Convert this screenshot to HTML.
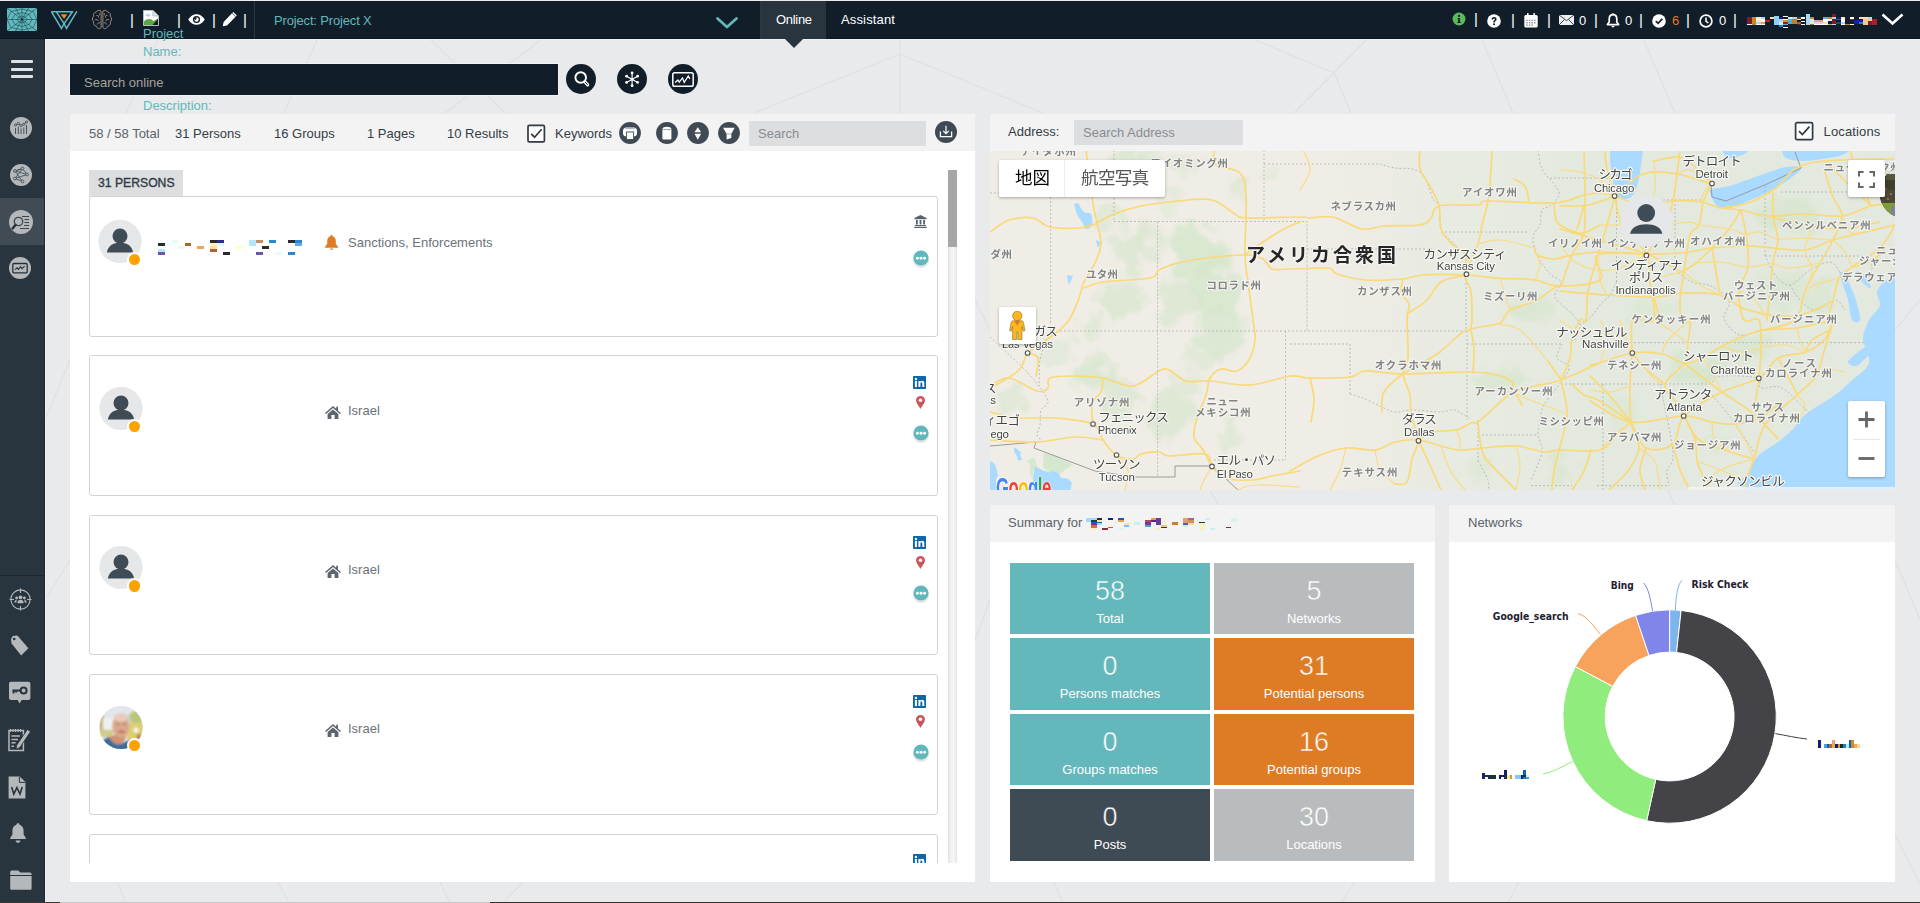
<!DOCTYPE html>
<html lang="en">
<head>
<meta charset="utf-8">
<title>Online</title>
<style>
*{box-sizing:border-box;margin:0;padding:0}
html,body{width:1920px;height:903px;overflow:hidden}
body{position:relative;background:#e9eaeb;font-family:"Liberation Sans","Noto Sans CJK JP",sans-serif;font-size:13px;color:#3f4850}
.abs{position:absolute}
.t{position:absolute;white-space:nowrap;line-height:1}
#bg{position:absolute;left:0;top:0;width:1920px;height:903px}
#topbar{position:absolute;left:0;top:0;width:1920px;height:39px;background:#111e2a;border-top:1px solid #ebebef}
#side{position:absolute;left:0;top:39px;width:45px;height:864px;background:#28343e}
#side .act{position:absolute;left:0;top:159px;width:45px;height:47px;background:#414b54}
.sic{position:absolute;left:10px;width:22px;height:22px;border-radius:50%;background:#b6babd}
.panel{position:absolute;background:#fff}
.phead{position:absolute;left:0;top:0;width:100%;background:#f3f3f3}
.inp{position:absolute;background:#dddee0;color:#8d9196;font-size:13px}
.card{position:absolute;left:89px;width:849px;height:140px;border:1px solid #d4d4d4;border-radius:3px;background:#fff}
.av{position:absolute;width:44px;height:44px;border-radius:50%;background:#e9eaeb;overflow:hidden}
.dot{position:absolute;width:12px;height:12px;border-radius:50%;background:#f59c0b;border:1px solid #fff}
.tile{position:absolute;width:200px;height:71px;color:#fff;text-align:center}
.tile b{position:absolute;left:0;width:100%;top:15px;font-weight:normal;font-size:27px;line-height:1}
.tile i{position:absolute;left:0;width:100%;top:49px;font-style:normal;font-size:13px;line-height:1}
.hd{font-size:13px;color:#333d46}.ct{font-size:13px;color:#6b7279}
.ms{fill:#828282;stroke:#f4f4f0;stroke-width:2.2px;font-weight:bold}.mc{fill:#444;stroke:#f7f7f4;stroke-width:2.4px}.mn{fill:#262626;stroke:#f4f4f0;stroke-width:2.5px;font-weight:bold}
.teal{background:#64b8bb}.grey{background:#b8bcbe}.org{background:#de7b25}.dark{background:#3f4b54}
.teal b{-webkit-text-stroke:.55px #64b8bb}.grey b{-webkit-text-stroke:.55px #b8bcbe}.org b{-webkit-text-stroke:.55px #de7b25}.dark b{-webkit-text-stroke:.55px #3f4b54}
</style>
</head>
<body>
<svg id="bg" viewBox="0 0 1920 903"><g stroke="#e0e1e3" stroke-width="1.3" fill="none">
<path d="M158 39L126 113L95 200M317.5 39L283.7 113M430 39L505 113M542 39L445 113M900 39V113M900 54L754 113M900 54L1043 113M1252.700 39L1334 72.800L1367 39M1334 72.800L1294 113M1334 72.800L1351 113M1481.500 39L1513 113M1643.500 39L1675 113"/>
<path d="M45 420L70 360M45 600L70 560M975 300L990 330M1895 330L1920 300M1895 560L1920 620M117 882L126 903M278 882L289 903M440 882L450 903M523 882L503 903M1054 882L1063 903M1355 882L1341 903M1519 882L1508 903M1895 835L1920 884M975 640L990 600M1668 490L1675 505M1210 490L1218 505"/>
</g></svg>

<!-- TOPBAR -->
<div class="abs" style="left:45px;top:39px;width:1875px;height:1px;background:#f0f0f1"></div>
<div class="abs" style="left:45px;top:39px;width:1px;height:864px;background:#f0f0f1"></div>
<div id="topbar"></div>
<div class="abs" style="left:0;top:38px;width:1920px;height:1px;background:#0c1721"></div>
<!-- topbar left icons -->
<svg class="abs" style="left:7px;top:8px" width="30" height="23" viewBox="0 0 30 23"><rect width="30" height="23" rx="1.2" fill="#5fb9bd"/><g stroke="#1d3b46" stroke-width=".55" fill="none"><path d="M15 0V23M0 11.5H30M0 0L30 23M30 0L0 23M8.500 0L21.500 23M21.500 0L8.500 23"/><polygon points="15,8 18.500,9.300 20,11.500 18.500,13.700 15,15 11.500,13.700 10,11.500 11.500,9.300"/><polygon points="15,4.500 22,6.500 25,11.500 22,16.500 15,18.500 8,16.500 5,11.500 8,6.500"/><polygon points="15,1 26,3.500 30,11.500 26,19.500 15,22 4,19.500 0,11.500 4,3.500"/></g><circle cx="15" cy="11.500" r="1" fill="#16313c"/></svg>
<svg class="abs" style="left:51px;top:11px" width="27" height="19" viewBox="0 0 27 19"><path d="M0.2 0.3L10.5 17.4L13.1 12.6L15.5 17.4L25.9 0.3" fill="none" stroke="#5fb9bd" stroke-width="1.5" stroke-linejoin="miter"/><path d="M1 0.8H22.2M5.4 0.8L13.1 12.6L21.4 0.8" fill="none" stroke="#5fb9bd" stroke-width="1.5"/><polygon points="9.7,3.2 16.3,3.2 13.1,8" fill="#f5891f"/></svg>
<svg class="abs" style="left:91px;top:9px" width="22" height="22" viewBox="0 0 22 22"><g fill="none" stroke="#bfa28b" stroke-width="0.8"><path d="M10.1 2.2C8.8 .8 6.3 1 5.4 3C3 3.2 2 5.4 2.8 7.2C1 8.6 1 11.4 2.6 12.8C2 15 3.4 17 5.4 17.2C6 19.6 8.8 20.6 10.1 18.6Z"/><path d="M11.9 2.2C13.2 .8 15.7 1 16.6 3C19 3.2 20 5.4 19.2 7.2C21 8.6 21 11.4 19.4 12.8C20 15 18.6 17 16.6 17.2C16 19.6 13.2 20.6 11.9 18.6Z"/><path d="M5.4 6.5C6.8 6.2 7.8 7.2 7.6 8.6M3.8 11C5.2 10 7 10.6 7.4 12.2M6.4 15.4C6.6 14 8 13.4 9.2 14M8 4.2C8.8 4.8 8.8 6 8 6.6M16.6 6.5C15.2 6.2 14.2 7.2 14.4 8.6M18.2 11C16.8 10 15 10.6 14.6 12.2M15.6 15.4C15.4 14 14 13.4 12.8 14M14 4.2C13.2 4.8 13.2 6 14 6.6"/></g></svg>
<div class="t" style="left:130px;top:12px;font-size:15px;color:#fff">|</div>
<svg class="abs" style="left:143px;top:10px" width="16" height="16" viewBox="0 0 16 16"><path d="M.5.5H10L15.5 6V15.5H.5Z" fill="#fff" stroke="#b9bdc2"/><path d="M10 .5V6H15.5" fill="#dfe3e8" stroke="#b9bdc2"/><path d="M1 15V11.5C4 8 8 8.5 10.5 11L15 8.5V15Z" fill="#5aa845"/><ellipse cx="5" cy="5.2" rx="2.6" ry="1.4" fill="#b9d4f3"/><path d="M9.5 15L15 9V15Z" fill="#111e2a"/></svg>
<div class="t" style="left:143px;top:25px;font-size:13px;line-height:18px;color:#62b8bb;white-space:normal;width:46px">Project Name:</div>
<div class="t" style="left:143px;top:97px;font-size:13px;line-height:18px;color:#62b8bb">Description:</div>
<div class="t" style="left:177px;top:12px;font-size:15px;color:#fff">|</div>
<svg class="abs" style="left:188px;top:14px" width="17" height="11" viewBox="0 0 17 11"><path d="M.3 5.5C3 1.2 6 .2 8.5 .2S14 1.2 16.7 5.5C14 9.8 11 10.8 8.5 10.8S3 9.8 .3 5.5Z" fill="#fff"/><circle cx="8.5" cy="5.5" r="3.6" fill="#111e2a"/><circle cx="8.5" cy="5.5" r="2.2" fill="#fff"/><circle cx="7.3" cy="4.4" r="1.3" fill="#111e2a"/></svg>
<div class="t" style="left:212px;top:12px;font-size:15px;color:#fff">|</div>
<svg class="abs" style="left:222px;top:12px" width="15" height="15" viewBox="0 0 15 15"><path d="M10 1.2L13.6 4.8L5 13.4L.8 14.2L1.6 10Z" fill="#fff"/><path d="M11.3 0L14.8 3.5L13.9 4.4L10.4 .9Z" fill="#fff"/></svg>
<div class="t" style="left:243px;top:12px;font-size:15px;color:#fff">|</div>
<div class="abs" style="left:254px;top:1px;width:1px;height:38px;background:#2b3742"></div>
<div class="t" id="tproj" style="left:274px;top:14px;font-size:13px;color:#62b8bb;letter-spacing:-.16px">Project: Project X</div>
<svg class="abs" style="left:715px;top:16px" width="24" height="14" viewBox="0 0 24 14"><path d="M2.5 2.5L12 11L21.5 2.5" fill="none" stroke="#62b8bb" stroke-width="2.8" stroke-linecap="round" stroke-linejoin="round"/></svg>
<div class="abs" style="left:760px;top:1px;width:1px;height:38px;background:#2b3742"></div>
<div class="abs" style="left:761px;top:1px;width:65px;height:38px;background:#28343e"></div>
<svg class="abs" style="left:785px;top:39px" width="18" height="9" viewBox="0 0 18 9"><path d="M0 0H18L9 9Z" fill="#28343e"/></svg>
<div class="t" id="tonl" style="left:776px;top:13px;font-size:13px;color:#fff;letter-spacing:-.3px">Online</div>
<div class="t" id="tass" style="left:841px;top:13px;font-size:13px;color:#fff;letter-spacing:.15px">Assistant</div>
<!-- topbar right -->
<svg class="abs" style="left:1452px;top:12px" width="14" height="14" viewBox="0 0 14 14"><circle cx="7" cy="7" r="6.5" fill="#5cb85c"/><circle cx="7" cy="3.9" r="1.1" fill="#111e2a"/><path d="M5.6 6H7.9V9.8H8.7V10.9H5.4V9.8H6.2V7H5.6Z" fill="#111e2a"/></svg>
<div class="t" style="left:1474px;top:10.600px;font-size:15px;color:#fff">|</div>
<svg class="abs" style="left:1487px;top:14px" width="14" height="14" viewBox="0 0 14 14"><circle cx="7" cy="7" r="6.8" fill="#fff"/><path d="M4.6 5.4C4.6 3.9 5.7 3.1 7.1 3.1S9.6 3.9 9.6 5.2C9.6 6.9 7.8 6.9 7.8 8.4H6.2C6.2 6.5 7.9 6.4 7.9 5.3C7.9 4.8 7.6 4.5 7.1 4.5S6.2 4.8 6.2 5.4Z" fill="#111e2a"/><circle cx="7" cy="10.2" r="1" fill="#111e2a"/></svg>
<div class="t" style="left:1511px;top:12px;font-size:15px;color:#fff">|</div>
<svg class="abs" style="left:1524px;top:13px" width="14" height="15" viewBox="0 0 14 15"><rect x=".3" y="2" width="13.4" height="12.6" rx="1.6" fill="#fff"/><rect x="3" y="0" width="1.6" height="3.4" rx=".6" fill="#fff"/><rect x="9.4" y="0" width="1.6" height="3.4" rx=".6" fill="#fff"/><g fill="#9aa3ad"><rect x="2.2" y="6.6" width="1.6" height="1.5"/><rect x="4.8" y="6.6" width="1.6" height="1.5"/><rect x="7.4" y="6.6" width="1.6" height="1.5"/><rect x="10" y="6.6" width="1.6" height="1.5"/><rect x="2.2" y="9" width="1.6" height="1.5"/><rect x="4.8" y="9" width="1.6" height="1.5"/><rect x="7.4" y="9" width="1.6" height="1.5"/><rect x="10" y="9" width="1.6" height="1.5"/><rect x="2.2" y="11.4" width="1.6" height="1.5"/><rect x="4.8" y="11.4" width="1.6" height="1.5"/><rect x="7.4" y="11.4" width="1.6" height="1.5"/></g></svg>
<div class="t" style="left:1547px;top:12px;font-size:15px;color:#fff">|</div>
<svg class="abs" style="left:1559px;top:15px" width="15" height="10" viewBox="0 0 15 10"><rect width="15" height="10" fill="#eceef0"/><path d="M0 0L7.5 5.6L15 0M0 10L5.6 4.4M15 10L9.4 4.4" fill="none" stroke="#3a4753" stroke-width="1"/></svg>
<div class="t" style="left:1579px;top:14px;font-size:13px;color:#fff">0</div>
<div class="t" style="left:1594px;top:12px;font-size:15px;color:#fff">|</div>
<svg class="abs" style="left:1606px;top:13px" width="14" height="15" viewBox="0 0 14 15"><path d="M7 1.6C4.4 1.6 3.2 3.8 3.2 6V9L1.4 11.6H12.6L10.8 9V6C10.8 3.8 9.6 1.6 7 1.6Z" fill="none" stroke="#fff" stroke-width="1.7" stroke-linejoin="round"/><circle cx="7" cy="1.2" r="1" fill="#fff"/><path d="M5.4 12.8H8.6C8.4 14 7.8 14.4 7 14.4S5.6 14 5.4 12.8Z" fill="#fff"/></svg>
<div class="t" style="left:1625px;top:14px;font-size:13px;color:#fff">0</div>
<div class="t" style="left:1639px;top:12px;font-size:15px;color:#fff">|</div>
<svg class="abs" style="left:1652px;top:14px" width="14" height="14" viewBox="0 0 14 14"><circle cx="7" cy="7" r="6.8" fill="#fff"/><path d="M3.8 7.2L6.1 9.4L10.3 4.9" fill="none" stroke="#111e2a" stroke-width="1.7"/></svg>
<div class="t" style="left:1672px;top:14px;font-size:13px;color:#e07b25">6</div>
<div class="t" style="left:1686px;top:12px;font-size:15px;color:#fff">|</div>
<svg class="abs" style="left:1699px;top:14px" width="14" height="14" viewBox="0 0 14 14"><circle cx="7" cy="7" r="5.9" fill="none" stroke="#fff" stroke-width="1.7"/><path d="M7 3.4V7.3L9.4 8.8" fill="none" stroke="#fff" stroke-width="1.5"/></svg>
<div class="t" style="left:1719px;top:14px;font-size:13px;color:#fff">0</div>
<div class="t" style="left:1733px;top:12px;font-size:15px;color:#fff">|</div>
<div id="uname"><div class="abs" style="left:1747.1px;top:17.1px;width:4.9px;height:6.6px;background:#7a1f2a"></div><div class="abs" style="left:1747.1px;top:23.7px;width:4.9px;height:1.2px;background:#fff"></div><div class="abs" style="left:1752.0px;top:17.1px;width:4.4px;height:7.8px;background:#c8862a"></div><div class="abs" style="left:1756.4px;top:17.1px;width:4.4px;height:1.8px;background:#ffe9c4"></div><div class="abs" style="left:1756.4px;top:18.9px;width:4.4px;height:1.3px;background:#fff"></div><div class="abs" style="left:1756.4px;top:20.2px;width:4.4px;height:1.8px;background:#ffe4c0"></div><div class="abs" style="left:1756.4px;top:22.0px;width:4.4px;height:1.8px;background:#a8d8f8"></div><div class="abs" style="left:1756.4px;top:23.7px;width:4.4px;height:1.2px;background:#fff"></div><div class="abs" style="left:1760.8px;top:17.1px;width:4.4px;height:1.8px;background:#a8d8f8"></div><div class="abs" style="left:1760.8px;top:18.9px;width:4.4px;height:3.1px;background:#fff"></div><div class="abs" style="left:1760.8px;top:22.0px;width:4.4px;height:2.2px;background:#e8a830"></div><div class="abs" style="left:1760.8px;top:24.2px;width:4.4px;height:0.7px;background:#fff"></div><div class="abs" style="left:1765.2px;top:20.2px;width:4.9px;height:1.8px;background:#c01f2a"></div><div class="abs" style="left:1770.1px;top:17.1px;width:4.0px;height:2.2px;background:#ffe0a0"></div><div class="abs" style="left:1774.1px;top:16.0px;width:4.9px;height:8.6px;background:#8fd0f8"></div><div class="abs" style="left:1779.0px;top:17.1px;width:4.4px;height:1.8px;background:#1a1a7a"></div><div class="abs" style="left:1779.0px;top:18.9px;width:4.4px;height:2.7px;background:#a8d8f8"></div><div class="abs" style="left:1779.0px;top:21.5px;width:4.4px;height:3.1px;background:#c8f0f0"></div><div class="abs" style="left:1779.0px;top:24.6px;width:4.4px;height:2.2px;background:#1a80d8"></div><div class="abs" style="left:1783.4px;top:16.0px;width:4.9px;height:1.1px;background:#fff"></div><div class="abs" style="left:1783.4px;top:18.9px;width:4.9px;height:1.3px;background:#fff"></div><div class="abs" style="left:1783.4px;top:20.2px;width:4.9px;height:1.8px;background:#d89020"></div><div class="abs" style="left:1783.4px;top:22.0px;width:4.9px;height:1.8px;background:#b8101a"></div><div class="abs" style="left:1783.4px;top:23.7px;width:4.9px;height:0.9px;background:#5ab8e8"></div><div class="abs" style="left:1783.4px;top:26.7px;width:4.9px;height:1.1px;background:#fff"></div><div class="abs" style="left:1788.3px;top:17.1px;width:4.0px;height:2.2px;background:#d8f0d8"></div><div class="abs" style="left:1788.3px;top:19.3px;width:4.0px;height:4.9px;background:#48b0e8"></div><div class="abs" style="left:1792.3px;top:17.1px;width:4.4px;height:2.2px;background:#a8d8f8"></div><div class="abs" style="left:1792.3px;top:19.3px;width:4.4px;height:4.9px;background:#c8801a"></div><div class="abs" style="left:1796.7px;top:17.1px;width:4.4px;height:1.8px;background:#6a3a1a"></div><div class="abs" style="left:1796.7px;top:18.9px;width:4.4px;height:1.3px;background:#e8e0d0"></div><div class="abs" style="left:1796.7px;top:21.5px;width:4.4px;height:2.2px;background:#7a7060"></div><div class="abs" style="left:1796.7px;top:23.7px;width:4.4px;height:1.2px;background:#6a1a2a"></div><div class="abs" style="left:1801.1px;top:17.1px;width:4.4px;height:2.2px;background:#fff"></div><div class="abs" style="left:1801.1px;top:21.1px;width:4.4px;height:1.3px;background:#fff"></div><div class="abs" style="left:1801.1px;top:23.7px;width:4.4px;height:1.2px;background:#fff"></div><div class="abs" style="left:1805.5px;top:14.0px;width:4.4px;height:10.9px;background:#a8d8f8"></div><div class="abs" style="left:1810.0px;top:17.1px;width:4.4px;height:2.2px;background:#c8862a"></div><div class="abs" style="left:1810.0px;top:19.3px;width:4.4px;height:4.9px;background:#d0f0e8"></div><div class="abs" style="left:1810.0px;top:24.2px;width:4.4px;height:0.7px;background:#a86a2a"></div><div class="abs" style="left:1814.4px;top:20.2px;width:4.4px;height:1.8px;background:#d8a0b8"></div><div class="abs" style="left:1814.4px;top:22.0px;width:4.4px;height:2.2px;background:#f8d0d8"></div><div class="abs" style="left:1814.4px;top:24.2px;width:4.4px;height:0.7px;background:#fff"></div><div class="abs" style="left:1818.8px;top:20.2px;width:4.4px;height:1.8px;background:#d8a090"></div><div class="abs" style="left:1818.8px;top:22.0px;width:4.4px;height:2.2px;background:#f8c8d0"></div><div class="abs" style="left:1818.8px;top:24.2px;width:4.4px;height:0.7px;background:#fff"></div><div class="abs" style="left:1823.3px;top:17.1px;width:4.9px;height:1.8px;background:#60a8e0"></div><div class="abs" style="left:1823.3px;top:18.9px;width:4.9px;height:3.1px;background:#fff"></div><div class="abs" style="left:1823.3px;top:22.0px;width:4.9px;height:2.2px;background:#ffe0b0"></div><div class="abs" style="left:1823.3px;top:24.2px;width:4.9px;height:0.7px;background:#fff"></div><div class="abs" style="left:1828.1px;top:17.1px;width:4.0px;height:1.8px;background:#c8862a"></div><div class="abs" style="left:1828.1px;top:18.9px;width:4.0px;height:2.2px;background:#fff"></div><div class="abs" style="left:1828.1px;top:22.0px;width:4.0px;height:2.2px;background:#1a1a3a"></div><div class="abs" style="left:1828.1px;top:24.2px;width:4.0px;height:0.7px;background:#c8a060"></div><div class="abs" style="left:1832.1px;top:14.0px;width:4.0px;height:3.1px;background:#7a1f2a"></div><div class="abs" style="left:1832.1px;top:17.1px;width:4.0px;height:2.2px;background:#a8d8f8"></div><div class="abs" style="left:1832.1px;top:19.3px;width:4.0px;height:1.8px;background:#6a1a2a"></div><div class="abs" style="left:1832.1px;top:21.1px;width:4.0px;height:2.7px;background:#7a1f2a"></div><div class="abs" style="left:1832.1px;top:23.7px;width:4.0px;height:1.2px;background:#a8d8f8"></div><div class="abs" style="left:1836.1px;top:17.1px;width:4.9px;height:1.8px;background:#1a1a5a"></div><div class="abs" style="left:1836.1px;top:18.9px;width:4.9px;height:0.9px;background:#1a60b8"></div><div class="abs" style="left:1836.1px;top:21.5px;width:4.9px;height:2.7px;background:#1a506a"></div><div class="abs" style="left:1841.0px;top:17.1px;width:4.4px;height:1.8px;background:#ffe9c4"></div><div class="abs" style="left:1841.0px;top:18.9px;width:4.4px;height:2.7px;background:#fff"></div><div class="abs" style="left:1841.0px;top:21.5px;width:4.4px;height:2.7px;background:#a8d8f8"></div><div class="abs" style="left:1841.0px;top:24.2px;width:4.4px;height:0.7px;background:#fff"></div><div class="abs" style="left:1845.4px;top:23.7px;width:4.4px;height:1.2px;background:#c8801a"></div><div class="abs" style="left:1849.8px;top:17.1px;width:4.4px;height:1.8px;background:#fff"></div><div class="abs" style="left:1849.8px;top:18.9px;width:4.4px;height:0.9px;background:#6a3a1a"></div><div class="abs" style="left:1849.8px;top:23.7px;width:4.4px;height:1.2px;background:#fff"></div><div class="abs" style="left:1854.3px;top:19.7px;width:4.4px;height:4.4px;background:#1a1ab8"></div><div class="abs" style="left:1858.7px;top:17.1px;width:4.4px;height:1.8px;background:#ffe0b0"></div><div class="abs" style="left:1858.7px;top:19.7px;width:4.4px;height:2.2px;background:#1a1ab8"></div><div class="abs" style="left:1858.7px;top:22.0px;width:4.4px;height:2.2px;background:#1a80d8"></div><div class="abs" style="left:1863.1px;top:17.1px;width:4.9px;height:2.2px;background:#ffd8c0"></div><div class="abs" style="left:1863.1px;top:19.3px;width:4.9px;height:5.3px;background:#f8c888"></div><div class="abs" style="left:1868.0px;top:17.1px;width:4.4px;height:2.2px;background:#a8d8f8"></div><div class="abs" style="left:1868.0px;top:19.3px;width:4.4px;height:1.3px;background:#f8c888"></div><div class="abs" style="left:1868.0px;top:20.6px;width:4.4px;height:4.3px;background:#7a1f2a"></div><div class="abs" style="left:1872.4px;top:18.9px;width:4.7px;height:6.0px;background:#a81f2a"></div></div>
<svg class="abs" style="left:1881px;top:13px" width="23" height="13" viewBox="0 0 23 13"><path d="M1.5 1.5L11.5 10.5L21.5 1.5" fill="none" stroke="#fff" stroke-width="2.6" stroke-linejoin="miter"/></svg>
<!-- SIDEBAR -->
<div id="side"><div class="act"></div></div>
<!-- hamburger -->
<div class="abs" style="left:11px;top:60px;width:22px;height:3px;background:#dfe2e4;border-radius:1px"></div>
<div class="abs" style="left:11px;top:67.5px;width:22px;height:3px;background:#dfe2e4;border-radius:1px"></div>
<div class="abs" style="left:11px;top:75px;width:22px;height:3px;background:#dfe2e4;border-radius:1px"></div>
<!-- side icons top -->
<svg class="abs" style="left:10px;top:117px" width="22" height="22" viewBox="0 0 22 22"><circle cx="11" cy="11" r="11" fill="#b4b8bb"/><g stroke="#4a555e" fill="none" stroke-width="1"><path d="M5.5 17V11M8.3 17V9.5M11 17V11.5M13.8 17V10.5M16.5 17V8"/><path d="M5.5 8L8.3 6.5L11 8.5L13.8 7.3L16.5 5" stroke-width=".8"/></g><g fill="#b4b8bb" stroke="#3b4750" stroke-width=".8"><circle cx="5.5" cy="8" r="1.1"/><circle cx="8.3" cy="6.5" r="1.1"/><circle cx="11" cy="8.5" r="1.1"/><circle cx="13.8" cy="7.3" r="1.1"/><circle cx="16.5" cy="5" r="1.1"/></g></svg>
<svg class="abs" style="left:10px;top:163.500px" width="22" height="22" viewBox="0 0 22 22"><circle cx="11" cy="11" r="11" fill="#b4b8bb"/><g stroke="#3b4750" fill="none" stroke-width=".8"><path d="M5 7L12.5 4.5L17 10.5L5 14.5L12.5 17.5L5 7L12.5 4.5L5 14.5M5 7L17 10.5"/></g><g fill="#b4b8bb" stroke="#3b4750" stroke-width=".8"><circle cx="5" cy="7" r="1.4"/><circle cx="12.5" cy="4.5" r="1.4"/><circle cx="17" cy="10.5" r="1.4"/><circle cx="5" cy="14.5" r="1.4"/><circle cx="12.5" cy="17.5" r="1.4"/></g></svg>
<svg class="abs" style="left:9px;top:209.500px" width="24" height="24" viewBox="0 0 24 24"><circle cx="12" cy="12" r="12" fill="#b4b8bb"/><g stroke="#3b4750" fill="none"><circle cx="9.5" cy="11.5" r="4.2" stroke-width="1.3" fill="#b4b8bb"/><path d="M6.6 14.8L3.6 18.4" stroke-width="2.4" stroke-linecap="round" stroke="#27313a"/><path d="M13 6.5H20M15.5 9.5H20M15.5 12.5H20M15 15.5H20M11 18.5H20" stroke-width="1"/></g></svg>
<svg class="abs" style="left:9px;top:257px" width="22" height="22" viewBox="0 0 22 22"><circle cx="11" cy="11" r="11" fill="#b4b8bb"/><rect x="3.8" y="6.5" width="14.4" height="9.4" rx="1.2" fill="none" stroke="#27313a" stroke-width="1.3"/><path d="M6 12.6L8.2 10.8L9.6 12.4L11.6 9.6L13 11.6L15.6 9.2" fill="none" stroke="#27313a" stroke-width="1.1"/></svg>
<div class="abs" style="left:0;top:575px;width:45px;height:1px;background:#1b2630"></div>
<!-- side icons bottom -->
<svg class="abs" style="left:9px;top:588px" width="23" height="23" viewBox="0 0 23 23"><circle cx="11.5" cy="11.5" r="9.6" fill="none" stroke="#b4b8bb" stroke-width="1.1"/><path d="M11.5 .5V5M11.5 18V22.5M.5 11.5H5M18 11.5H22.5" stroke="#b4b8bb" stroke-width="1.1"/><g fill="#b4b8bb"><circle cx="11.5" cy="9.3" r="1.9"/><path d="M8.4 15.2C8.4 12.6 9.8 11.8 11.5 11.8S14.6 12.6 14.6 15.2Z"/><circle cx="7.6" cy="10" r="1.4"/><path d="M5.3 14.4C5.3 12.5 6.4 11.9 7.8 12C7.4 12.8 7.4 13.6 7.4 14.4Z"/><circle cx="15.4" cy="10" r="1.4"/><path d="M17.7 14.4C17.7 12.5 16.6 11.9 15.2 12C15.6 12.8 15.6 13.6 15.6 14.4Z"/></g></svg>
<svg class="abs" style="left:10px;top:635px" width="20" height="22" viewBox="0 0 20 22"><path d="M1 4.2L2.6 1L7.4 .6L18.4 13.2L11.2 20.6L1.6 8.6Z" fill="#b4b8bb"/><circle cx="4.2" cy="4" r="1.3" fill="#28343e"/></svg>
<svg class="abs" style="left:8px;top:681px" width="24" height="24" viewBox="0 0 24 24"><path d="M3 .8H20.4C21.6 .8 22.4 1.6 22.4 2.8V17C22.4 18.2 21.6 19 20.4 19H13.6L11.6 22.6L9.6 19H3C1.8 19 1 18.2 1 17V2.8C1 1.6 1.8 .8 3 .8Z" fill="#b4b8bb"/><circle cx="15.6" cy="9.6" r="3" fill="none" stroke="#28343e" stroke-width="2"/><path d="M12.6 9.6H4.4M5.6 9.6V12.4M8.2 9.6V11.6" stroke="#28343e" stroke-width="2" fill="none"/></svg>
<svg class="abs" style="left:8px;top:728px" width="24" height="24" viewBox="0 0 24 24"><path d="M1 2.6H15.4V22.6H1Z" fill="none" stroke="#b4b8bb" stroke-width="1.5"/><path d="M2.5 1V4M5 1V4M7.5 1V4M10 1V4M12.5 1V4" stroke="#b4b8bb" stroke-width="1.1"/><path d="M3.4 8H12M3.4 11.4H10M3.4 14.8H7.6M3.4 18.2H6" stroke="#b4b8bb" stroke-width="1.5"/><path d="M19.4 1.4L22.6 3.6L12 19.4L8 21.4L8.6 17.2Z" fill="#b4b8bb" stroke="#28343e" stroke-width=".9"/></svg>
<svg class="abs" style="left:8px;top:776px" width="18" height="23" viewBox="0 0 18 23"><path d="M.6 .4H11.8L17.4 6V22.4H.6Z" fill="#b4b8bb"/><path d="M11.4 .8V6.4H17" fill="none" stroke="#28343e" stroke-width="1"/><path d="M3.6 11L5.8 18L8.9 11.6L12 18L14.2 11" fill="none" stroke="#28343e" stroke-width="1.6" stroke-linejoin="miter"/></svg>
<svg class="abs" style="left:10px;top:823px" width="16" height="21" viewBox="0 0 16 21"><path d="M8 .2C9 .2 9.6 .8 9.6 1.8C12.4 2.6 13.6 5 13.6 8V11.6L15.8 15V16H.2V15L2.4 11.6V8C2.4 5 3.6 2.6 6.4 1.8C6.4 .8 7 .2 8 .2Z" fill="#b4b8bb"/><path d="M5.6 17.4H10.4C10.2 19.2 9.2 19.8 8 19.8S5.8 19.2 5.6 17.4Z" fill="#b4b8bb"/></svg>
<svg class="abs" style="left:10px;top:870px" width="22" height="20" viewBox="0 0 22 20"><path d="M.2 2C.2 1 1 .4 1.8 .4H8L10.4 2.6H20C21 2.6 21.6 3.4 21.6 4.2V5H.2Z" fill="#b4b8bb"/><path d="M.2 6H21.6V18.4C21.6 19.2 21 19.8 20.2 19.8H1.6C.8 19.8 .2 19.2 .2 18.4Z" fill="#b4b8bb"/></svg>
<div class="abs" style="left:44px;top:39px;width:1px;height:864px;background:#1c2732"></div>
<div class="abs" style="left:0;top:902px;width:60px;height:1px;background:#3a3835"></div>
<div class="abs" style="left:60px;top:902px;width:430px;height:1px;background:#c6c6c6"></div>
<div class="abs" style="left:490px;top:902px;width:1430px;height:1px;background:#33312f"></div>

<!-- SEARCH -->
<div class="abs" id="search" style="left:70px;top:64px;width:488px;height:31px;background:#111e2a;box-shadow:0 0 0 1px rgba(255,255,255,.45)"></div>
<div class="t" id="tso" style="left:84px;top:76px;font-size:13px;color:#a9a29c">Search online</div>
<svg class="abs" style="left:566px;top:64px" width="30" height="30" viewBox="0 0 30 30"><circle cx="15" cy="15" r="15" fill="#111e2a"/><circle cx="14.700" cy="13.500" r="5.300" fill="none" stroke="#fff" stroke-width="1.900"/><path d="M18.900 17.900L21.700 20.900" stroke="#fff" stroke-width="3.200" stroke-linecap="round"/><path d="M19.300 18.300L21.400 20.600" stroke="#111e2a" stroke-width="1" stroke-linecap="round"/></svg>
<svg class="abs" style="left:617px;top:64px" width="30" height="30" viewBox="0 0 30 30"><circle cx="15" cy="15" r="15" fill="#111e2a"/><g stroke="#fff" stroke-width="1.150"><path d="M15.100 8.800V21.800M9.500 12.200L20.700 18.400M20.700 12.200L9.500 18.400"/></g><g fill="#fff"><circle cx="15.100" cy="8.900" r="1.400"/><circle cx="15.100" cy="21.700" r="1.400"/><circle cx="9.600" cy="12.200" r="1.400"/><circle cx="20.600" cy="18.400" r="1.400"/><circle cx="20.600" cy="12.200" r="1.400"/><circle cx="9.600" cy="18.400" r="1.400"/><circle cx="15.100" cy="15.300" r="1.200"/></g></svg>
<svg class="abs" style="left:668px;top:64px" width="30" height="30" viewBox="0 0 30 30"><circle cx="15" cy="15" r="15" fill="#111e2a"/><rect x="4.800" y="8.800" width="20.400" height="13.400" rx="1.800" fill="none" stroke="#fff" stroke-width="1.500"/><path d="M7.200 18.500L9.900 16L11.200 18.100L14.500 13.900L16.200 18.400L20.300 11.900L21.900 15" fill="none" stroke="#fff" stroke-width="1.250"/></svg>

<!-- LEFT PANEL -->
<div class="panel" id="lp" style="left:70px;top:114px;width:905px;height:768px"><div class="phead" style="height:37px"></div></div>
<div class="t hd" id="h1" style="left:89px;top:127px;color:#59626a">58 / 58 Total</div>
<div class="t hd" id="h2" style="left:175px;top:127px">31 Persons</div>
<div class="t hd" id="h3" style="left:274px;top:127px">16 Groups</div>
<div class="t hd" id="h4" style="left:367px;top:127px">1 Pages</div>
<div class="t hd" id="h5" style="left:447px;top:127px">10 Results</div>
<svg class="abs" style="left:527px;top:124px" width="19" height="19" viewBox="0 0 19 19"><rect x="1" y="1.4" width="16.4" height="16.4" rx="1.4" fill="#fff" stroke="#2f3a44" stroke-width="1.7"/><path d="M4.2 9.8L7.6 13.2L14.6 5.2" fill="none" stroke="#2f3a44" stroke-width="1.7"/></svg>
<div class="t hd" id="h6" style="left:555px;top:127px">Keywords</div>
<svg class="abs" style="left:619px;top:122.3px" width="22" height="22" viewBox="0 0 22 22"><circle cx="11" cy="11" r="10.9" fill="#3f4a54"/><rect x="4" y="5.600" width="14" height="9" rx="3.600" fill="#fff"/><rect x="6.200" y="5.800" width="9.600" height="1.300" fill="#b4b9be"/><rect x="7.400" y="10" width="7.200" height="7.600" fill="#fff" stroke="#3f4a54" stroke-width=".9"/></svg>
<svg class="abs" style="left:656px;top:122.3px" width="22" height="22" viewBox="0 0 22 22"><circle cx="11" cy="11" r="10.9" fill="#3f4a54"/><path d="M6.400 7.600H15.400V16.600C15.400 17.200 15 17.600 14.400 17.600H7.400C6.800 17.600 6.400 17.200 6.400 16.600Z" fill="#fff"/><path d="M6.200 7.300C6.600 5.600 8.400 4.800 10.900 4.800S15.200 5.600 15.600 7.300Z" fill="#fff"/><path d="M6.200 7.500H15.600" stroke="#9aa1a8" stroke-width=".9"/></svg>
<svg class="abs" style="left:687px;top:122.3px" width="22" height="22" viewBox="0 0 22 22"><circle cx="11" cy="11" r="10.9" fill="#3f4a54"/><path d="M10.800 5.200L14.100 10.300H7.500Z" fill="#fff"/><path d="M10.800 17.800L14.100 11.800H7.500Z" fill="#fff"/></svg>
<svg class="abs" style="left:718px;top:122.3px" width="22" height="22" viewBox="0 0 22 22"><circle cx="11" cy="11" r="10.9" fill="#3f4a54"/><path d="M5 5.800H16.700L13.300 11.800V16L8.600 17.600V11.800Z" fill="#fff"/><path d="M8.400 11.900H13.400" stroke="#8b939a" stroke-width=".8"/></svg>
<div class="inp" style="left:749px;top:121px;width:177px;height:25px"></div>
<div class="t" id="tsrch" style="left:758px;top:127px;color:#878c92">Search</div>
<svg class="abs" style="left:935px;top:121px" width="22" height="22" viewBox="0 0 22 22"><circle cx="11" cy="11" r="11" fill="#3f4a54"/><path d="M5.4 10.6V15.6H16.6V10.6" fill="none" stroke="#fff" stroke-width="1.3"/><path d="M11 4.8V12.4M8.2 9.8L11 12.6L13.8 9.8" fill="none" stroke="#fff" stroke-width="1.2"/></svg>
<!-- list -->
<div class="abs" id="list" style="left:70px;top:170px;width:905px;height:693px;overflow:hidden">
<div class="abs" style="left:19px;top:0;width:94px;height:27px;background:#dddee0"></div>
<div class="t" id="tag" style="left:28px;top:6.5px;font-size:12.2px;color:#2f3a44;-webkit-text-stroke:.35px #2f3a44">31 PERSONS</div>
<div class="card" style="left:19px;top:26px;height:141px"></div>
<div class="card" style="left:19px;top:185px;height:141px"></div>
<div class="card" style="left:19px;top:345px;height:140px"></div>
<div class="card" style="left:19px;top:504px;height:141px"></div>
<div class="card" style="left:19px;top:664px;height:141px"></div>
<svg class="abs" style="left:28.4px;top:49.5px" width="44" height="44" viewBox="0 0 44 44"><circle cx="22" cy="21.5" r="21.6" fill="#e6e7e9"/><circle cx="22" cy="16" r="7.5" fill="#3f4b55"/><path d="M8.8 32.6C10 26 15 22.6 22 22.6S34 26 35.2 32.6Z" fill="#3f4b55"/></svg><div class="abs" style="left:56.7px;top:81.6px;width:15.4px;height:15.4px;border-radius:50%;background:#ffa200;border:2px solid #fff"></div><div class="abs" style="left:140.3px;top:70.4px;width:6.8px;height:3px;background:#2b2b2b"></div><div class="abs" style="left:147px;top:70.4px;width:6.8px;height:3px;background:#2c2c8c"></div><div class="abs" style="left:178.8px;top:70.4px;width:6.8px;height:3px;background:#b3e5fc"></div><div class="abs" style="left:185.9px;top:70.4px;width:6.8px;height:3px;background:#c98b60"></div><div class="abs" style="left:198.9px;top:70.4px;width:6.8px;height:3px;background:#2a88d0"></div><div class="abs" style="left:218.1px;top:70.4px;width:6.8px;height:3px;background:#2b2b2b"></div><div class="abs" style="left:224.9px;top:70.4px;width:6.8px;height:3px;background:#2a88d0"></div><div class="abs" style="left:88.1px;top:73.3px;width:6.8px;height:3px;background:#2b2b2b"></div><div class="abs" style="left:101.7px;top:70.4px;width:6.8px;height:3px;background:#e6fcfc"></div><div class="abs" style="left:94.9px;top:73.3px;width:6.8px;height:3px;background:#eefefe"></div><div class="abs" style="left:108.4px;top:76.3px;width:6.8px;height:3px;background:#e6fcfc"></div><div class="abs" style="left:114.5px;top:73.3px;width:6.8px;height:3px;background:#b0652a"></div><div class="abs" style="left:140.3px;top:73.3px;width:6.8px;height:3px;background:#fff3c4"></div><div class="abs" style="left:147px;top:73.3px;width:6.8px;height:3px;background:#dcfafa"></div><div class="abs" style="left:178.8px;top:73.3px;width:6.8px;height:3px;background:#b3e5fc"></div><div class="abs" style="left:224.9px;top:73.3px;width:6.8px;height:3px;background:#64a8ec"></div><div class="abs" style="left:127.4px;top:76.3px;width:6.8px;height:3px;background:#e8a860"></div><div class="abs" style="left:140.3px;top:76.3px;width:6.8px;height:3px;background:#ffe0a0"></div><div class="abs" style="left:166px;top:76.3px;width:6.8px;height:3px;background:#ffffc8"></div><div class="abs" style="left:192.4px;top:76.3px;width:6.8px;height:3px;background:#2b2b2b"></div><div class="abs" style="left:88.1px;top:79.3px;width:6.8px;height:3px;background:#b3e5fc"></div><div class="abs" style="left:140.3px;top:79.3px;width:6.8px;height:3px;background:#b0652a"></div><div class="abs" style="left:88.1px;top:82.3px;width:6.8px;height:3px;background:#6458b0"></div><div class="abs" style="left:153.1px;top:82.3px;width:6.8px;height:3px;background:#2b2b2b"></div><div class="abs" style="left:185.9px;top:82.3px;width:6.8px;height:3px;background:#6458b0"></div><div class="abs" style="left:205.3px;top:82.3px;width:6.8px;height:3px;background:#e6fcfc"></div><div class="abs" style="left:218.1px;top:82.3px;width:6.8px;height:3px;background:#2a88d0"></div><svg class="abs" style="left:255px;top:65px" width="13" height="15" viewBox="0 0 13 15"><path d="M6.5 0C7.2 0 7.6 .5 7.6 1.2C9.8 1.8 10.8 3.8 10.8 6V8.8L13 12V12.8H0V12L2.2 8.8V6C2.2 3.8 3.2 1.8 5.4 1.2C5.4 .5 5.8 0 6.5 0Z" fill="#e07b25"/><path d="M4.9 13.6H8.1C8 14.6 7.3 15 6.5 15S5 14.6 4.9 13.6Z" fill="#e07b25"/></svg><div class="t ct" id="tsanc" style="left:278px;top:66px">Sanctions, Enforcements</div><svg class="abs" style="left:844px;top:45px" width="13" height="13" viewBox="0 0 13 13"><path d="M6.5 0L12.6 3V4.2H.4V3Z" fill="#59636b"/><path d="M2 5H3.8V9.6H2ZM5.6 5H7.4V9.6H5.6ZM9.2 5H11V9.6H9.2Z" fill="#59636b"/><path d="M1 10H12V11H1ZM.2 11.8H12.8V13H.2Z" fill="#59636b"/></svg><svg class="abs" style="left:840.5px;top:78.7px" width="20" height="21" viewBox="0 0 20 21"><ellipse cx="10" cy="11.5" rx="8" ry="7.6" fill="#000" opacity=".10"/><circle cx="10" cy="9" r="7.6" fill="#60b8bc"/><circle cx="6.4" cy="9.3" r="1.45" fill="#fff"/><circle cx="10" cy="9.3" r="1.45" fill="#fff"/><circle cx="13.6" cy="9.3" r="1.45" fill="#fff"/></svg><svg class="abs" style="left:28.5px;top:216.5px" width="44" height="44" viewBox="0 0 44 44"><circle cx="22" cy="21.5" r="21.6" fill="#e6e7e9"/><circle cx="22" cy="16" r="7.5" fill="#3f4b55"/><path d="M8.8 32.6C10 26 15 22.6 22 22.6S34 26 35.2 32.6Z" fill="#3f4b55"/></svg><div class="abs" style="left:56.8px;top:249px;width:15.4px;height:15.4px;border-radius:50%;background:#ffa200;border:2px solid #fff"></div><svg class="abs" style="left:254.5px;top:235.5px" width="16" height="13" viewBox="0 0 16 13"><path d="M8 0L11.2 2.8V.8H13V4.4L16 7L15 8.1L8 2L1 8.1L0 7Z" fill="#5d666e"/><path d="M8 3.4L13.4 8.1V13H9.6V9H6.4V13H2.6V8.1Z" fill="#5d666e"/></svg><div class="t ct" style="left:278px;top:233.8px">Israel</div><svg class="abs" style="left:843px;top:205.8px" width="13" height="13" viewBox="0 0 13 13"><rect width="13" height="13" rx=".8" fill="#0b67a9"/><rect x="1.9" y="4.9" width="2" height="6.2" fill="#fff"/><circle cx="2.9" cy="2.9" r="1.2" fill="#fff"/><path d="M5.4 4.9H7.3V5.8C7.7 5.1 8.4 4.7 9.3 4.7C10.8 4.7 11.3 5.7 11.3 7.3V11.1H9.3V7.8C9.3 6.9 9 6.5 8.4 6.5C7.7 6.5 7.4 7 7.4 7.8V11.1H5.4Z" fill="#fff"/></svg><svg class="abs" style="left:845.5px;top:226px" width="9" height="13" viewBox="0 0 9 13"><path d="M4.5 0C7 0 9 1.9 9 4.3C9 7.2 5.6 10.6 4.5 13C3.4 10.6 0 7.2 0 4.3C0 1.9 2 0 4.5 0Z" fill="#c9565c"/><circle cx="4.5" cy="4.2" r="1.8" fill="#fff"/></svg><svg class="abs" style="left:840.5px;top:254.2px" width="20" height="21" viewBox="0 0 20 21"><ellipse cx="10" cy="11.5" rx="8" ry="7.6" fill="#000" opacity=".10"/><circle cx="10" cy="9" r="7.6" fill="#60b8bc"/><circle cx="6.4" cy="9.3" r="1.45" fill="#fff"/><circle cx="10" cy="9.3" r="1.45" fill="#fff"/><circle cx="13.6" cy="9.3" r="1.45" fill="#fff"/></svg>
<svg class="abs" style="left:28.5px;top:375.9px" width="44" height="44" viewBox="0 0 44 44"><circle cx="22" cy="21.5" r="21.6" fill="#e6e7e9"/><circle cx="22" cy="16" r="7.5" fill="#3f4b55"/><path d="M8.8 32.6C10 26 15 22.6 22 22.6S34 26 35.2 32.6Z" fill="#3f4b55"/></svg><div class="abs" style="left:56.8px;top:408.4px;width:15.4px;height:15.4px;border-radius:50%;background:#ffa200;border:2px solid #fff"></div><svg class="abs" style="left:254.5px;top:395.1px" width="16" height="13" viewBox="0 0 16 13"><path d="M8 0L11.2 2.8V.8H13V4.4L16 7L15 8.1L8 2L1 8.1L0 7Z" fill="#5d666e"/><path d="M8 3.4L13.4 8.1V13H9.6V9H6.4V13H2.6V8.1Z" fill="#5d666e"/></svg><div class="t ct" style="left:278px;top:393.4px">Israel</div><svg class="abs" style="left:843px;top:365.8px" width="13" height="13" viewBox="0 0 13 13"><rect width="13" height="13" rx=".8" fill="#0b67a9"/><rect x="1.9" y="4.9" width="2" height="6.2" fill="#fff"/><circle cx="2.9" cy="2.9" r="1.2" fill="#fff"/><path d="M5.4 4.9H7.3V5.8C7.7 5.1 8.4 4.7 9.3 4.7C10.8 4.7 11.3 5.7 11.3 7.3V11.1H9.3V7.8C9.3 6.9 9 6.5 8.4 6.5C7.7 6.5 7.4 7 7.4 7.8V11.1H5.4Z" fill="#fff"/></svg><svg class="abs" style="left:845.5px;top:386px" width="9" height="13" viewBox="0 0 9 13"><path d="M4.5 0C7 0 9 1.9 9 4.3C9 7.2 5.6 10.6 4.5 13C3.4 10.6 0 7.2 0 4.3C0 1.9 2 0 4.5 0Z" fill="#c9565c"/><circle cx="4.5" cy="4.2" r="1.8" fill="#fff"/></svg><svg class="abs" style="left:840.5px;top:414.2px" width="20" height="21" viewBox="0 0 20 21"><ellipse cx="10" cy="11.5" rx="8" ry="7.6" fill="#000" opacity=".10"/><circle cx="10" cy="9" r="7.6" fill="#60b8bc"/><circle cx="6.4" cy="9.3" r="1.45" fill="#fff"/><circle cx="10" cy="9.3" r="1.45" fill="#fff"/><circle cx="13.6" cy="9.3" r="1.45" fill="#fff"/></svg>
<svg class="abs" style="left:28.5px;top:535.5px" width="44" height="44" viewBox="0 0 44 44"><defs><clipPath id="avc"><circle cx="22" cy="21.5" r="21.6"/></clipPath><filter id="avb" x="-20%" y="-20%" width="140%" height="140%"><feGaussianBlur stdDeviation="1.3"/></filter></defs><g clip-path="url(#avc)"><rect width="44" height="44" fill="#e2e7ed"/><g filter="url(#avb)"><ellipse cx="37" cy="22" rx="11" ry="17" fill="#dccf72"/><ellipse cx="38" cy="11" rx="8" ry="6" fill="#b9c77c"/><ellipse cx="37" cy="24" rx="2.600" ry="2.600" fill="#fbf6e6"/><rect x="-2" y="24" width="16" height="7" fill="#cdcd8c"/><ellipse cx="3" cy="17" rx="3.500" ry="8" fill="#cbb982"/><rect x="4" y="12" width="10" height="11" fill="#eef0f2"/><path d="M0 46C1 36 6 30.500 12 31L21 38L31 34C36 37 36 42 36 46Z" fill="#3c6c9a"/><path d="M10 31C14 29 16 30 18 27L27 31C26 35 22 38.500 19 38.500C15 38 12 35 10 31Z" fill="#cf9272"/><ellipse cx="21.800" cy="20" rx="8.600" ry="11.600" fill="#dba78b"/><ellipse cx="22" cy="11.500" rx="7.200" ry="4.200" fill="#e8cbbd"/><ellipse cx="30" cy="14" rx="1.600" ry="4" fill="#cfcac8"/><ellipse cx="22.500" cy="25.800" rx="3.600" ry="1.300" fill="#b86e62"/><ellipse cx="19" cy="18" rx="1.800" ry=".8" fill="#9a7a72"/><ellipse cx="25.500" cy="18" rx="1.800" ry=".8" fill="#9a7a72"/><ellipse cx="40" cy="31" rx="2.500" ry="3" fill="#b9805e"/></g></g></svg><div class="abs" style="left:56.8px;top:568px;width:15.4px;height:15.4px;border-radius:50%;background:#ffa200;border:2px solid #fff"></div><svg class="abs" style="left:254.5px;top:554.1px" width="16" height="13" viewBox="0 0 16 13"><path d="M8 0L11.2 2.8V.8H13V4.4L16 7L15 8.1L8 2L1 8.1L0 7Z" fill="#5d666e"/><path d="M8 3.4L13.4 8.1V13H9.6V9H6.4V13H2.6V8.1Z" fill="#5d666e"/></svg><div class="t ct" style="left:278px;top:552.4px">Israel</div><svg class="abs" style="left:843px;top:524.8px" width="13" height="13" viewBox="0 0 13 13"><rect width="13" height="13" rx=".8" fill="#0b67a9"/><rect x="1.9" y="4.9" width="2" height="6.2" fill="#fff"/><circle cx="2.9" cy="2.9" r="1.2" fill="#fff"/><path d="M5.4 4.9H7.3V5.8C7.7 5.1 8.4 4.7 9.3 4.7C10.8 4.7 11.3 5.7 11.3 7.3V11.1H9.3V7.8C9.3 6.9 9 6.5 8.4 6.5C7.7 6.5 7.4 7 7.4 7.8V11.1H5.4Z" fill="#fff"/></svg><svg class="abs" style="left:845.5px;top:545px" width="9" height="13" viewBox="0 0 9 13"><path d="M4.5 0C7 0 9 1.9 9 4.3C9 7.2 5.6 10.6 4.5 13C3.4 10.6 0 7.2 0 4.3C0 1.9 2 0 4.5 0Z" fill="#c9565c"/><circle cx="4.5" cy="4.2" r="1.8" fill="#fff"/></svg><svg class="abs" style="left:840.5px;top:573.2px" width="20" height="21" viewBox="0 0 20 21"><ellipse cx="10" cy="11.5" rx="8" ry="7.6" fill="#000" opacity=".10"/><circle cx="10" cy="9" r="7.6" fill="#60b8bc"/><circle cx="6.4" cy="9.3" r="1.45" fill="#fff"/><circle cx="10" cy="9.3" r="1.45" fill="#fff"/><circle cx="13.6" cy="9.3" r="1.45" fill="#fff"/></svg>
<svg class="abs" style="left:843px;top:684px" width="13" height="13" viewBox="0 0 13 13"><rect width="13" height="13" rx=".8" fill="#0b67a9"/><rect x="1.9" y="4.9" width="2" height="6.2" fill="#fff"/><circle cx="2.9" cy="2.9" r="1.2" fill="#fff"/><path d="M5.4 4.9H7.3V5.8C7.7 5.1 8.4 4.7 9.3 4.7C10.8 4.7 11.3 5.7 11.3 7.3V11.1H9.3V7.8C9.3 6.9 9 6.5 8.4 6.5C7.7 6.5 7.4 7 7.4 7.8V11.1H5.4Z" fill="#fff"/></svg>
<div class="abs" style="left:878px;top:0;width:9px;height:693px;background:linear-gradient(to right,#e2e2e2,#f2f2f2 30%,#f6f6f6 55%,#f0f0f0 80%,#e4e4e4)"></div>
<div class="abs" style="left:878px;top:0;width:9px;height:77px;background:#a6a6a6"></div>
</div>

<!-- MAP PANEL -->
<div class="panel" id="mp" style="left:990px;top:114px;width:905px;height:376px"><div class="phead" style="height:37px"></div></div>
<div class="t hd" id="taddr" style="left:1008px;top:125px">Address:</div>
<div class="inp" style="left:1074px;top:120px;width:169px;height:25px"></div>
<div class="t" id="tsa" style="left:1083px;top:126px;color:#878c92">Search Address</div>
<svg class="abs" style="left:1794px;top:121px" width="20" height="20" viewBox="0 0 20 20"><rect x="1.6" y="1.6" width="17" height="17" rx="1.4" fill="#fff" stroke="#2f3a44" stroke-width="1.7"/><path d="M5 10.2L8.4 13.6L15.4 5.6" fill="none" stroke="#2f3a44" stroke-width="1.7"/></svg>
<div class="t hd" id="tloc" style="left:1823.5px;top:125px;letter-spacing:.15px">Locations</div>
<div class="abs" id="map" style="left:990px;top:151px;width:905px;height:339px;overflow:hidden;background:#e9ece2">
<!--MAPSTART--><svg class="abs" style="left:0;top:0" width="905" height="339" viewBox="990 151 905 339"><defs><linearGradient id="lg" x1="990" x2="1895" y1="0" y2="0" gradientUnits="userSpaceOnUse"><stop offset="0" stop-color="#f0ede6"/><stop offset=".36" stop-color="#f0ede6"/><stop offset=".5" stop-color="#e8ebe1"/><stop offset=".7" stop-color="#e3e9de"/><stop offset="1" stop-color="#e3e9de"/></linearGradient><filter id="gb" x="-5%" y="-5%" width="110%" height="110%"><feGaussianBlur stdDeviation="3.2" result="b"/><feTurbulence type="fractalNoise" baseFrequency=".045" numOctaves="3" seed="7" result="t"/><feDisplacementMap in="b" in2="t" scale="34" xChannelSelector="R" yChannelSelector="G"/></filter></defs><rect x="990" y="151" width="905" height="339" fill="url(#lg)"/><g filter="url(#gb)" fill="#d3e5ca"><ellipse cx="1195" cy="250" rx="30" ry="26" opacity="0.75"/><ellipse cx="1215" cy="290" rx="24" ry="28" opacity="0.75"/><ellipse cx="1180" cy="300" rx="20" ry="22" opacity="0.6"/><ellipse cx="1222" cy="335" rx="22" ry="26" opacity="0.7"/><ellipse cx="1200" cy="360" rx="14" ry="14" opacity="0.5"/><ellipse cx="1130" cy="250" rx="20" ry="22" opacity="0.6"/><ellipse cx="1120" cy="300" rx="22" ry="22" opacity="0.6"/><ellipse cx="1150" cy="235" rx="16" ry="10" opacity="0.5"/><ellipse cx="1110" cy="215" rx="16" ry="10" opacity="0.5"/><ellipse cx="1135" cy="160" rx="25" ry="9" opacity="0.7"/><ellipse cx="1185" cy="165" rx="18" ry="10" opacity="0.5"/><ellipse cx="1170" cy="200" rx="12" ry="10" opacity="0.4"/><ellipse cx="1095" cy="375" rx="22" ry="18" opacity="0.7"/><ellipse cx="1120" cy="400" rx="18" ry="15" opacity="0.6"/><ellipse cx="1170" cy="415" rx="22" ry="25" opacity="0.6"/><ellipse cx="1185" cy="385" rx="15" ry="10" opacity="0.5"/><ellipse cx="1230" cy="440" rx="12" ry="15" opacity="0.5"/><ellipse cx="1010" cy="400" rx="15" ry="15" opacity="0.5"/><ellipse cx="1055" cy="350" rx="18" ry="15" opacity="0.4"/><ellipse cx="1090" cy="330" rx="12" ry="14" opacity="0.5"/><ellipse cx="1240" cy="190" rx="10" ry="14" opacity="0.5"/><ellipse cx="1270" cy="175" rx="8" ry="8" opacity="0.4"/><ellipse cx="1700" cy="370" rx="30" ry="12" opacity="0.8"/><ellipse cx="1740" cy="350" rx="30" ry="10" opacity="0.6"/><ellipse cx="1790" cy="215" rx="30" ry="18" opacity="0.6"/><ellipse cx="1780" cy="290" rx="25" ry="18" opacity="0.5"/><ellipse cx="1530" cy="310" rx="25" ry="12" opacity="0.6"/><ellipse cx="1500" cy="380" rx="28" ry="12" opacity="0.6"/><ellipse cx="1650" cy="310" rx="20" ry="10" opacity="0.4"/><ellipse cx="1620" cy="410" rx="12" ry="15" opacity="0.4"/><ellipse cx="1720" cy="440" rx="15" ry="10" opacity="0.4"/><ellipse cx="1820" cy="300" rx="15" ry="20" opacity="0.5"/><ellipse cx="1560" cy="470" rx="12" ry="15" opacity="0.5"/><ellipse cx="1480" cy="470" rx="12" ry="14" opacity="0.4"/></g><g fill="#aadaff"><path d="M1610.0 150.0C1610.2 153.2 1610.0 161.8 1611.0 169.0C1612.0 176.2 1613.8 188.0 1616.0 193.0C1618.2 198.0 1621.2 198.7 1624.0 199.0C1626.8 199.3 1630.5 198.5 1633.0 195.0C1635.5 191.5 1637.3 185.5 1639.0 178.0C1640.7 170.5 1642.3 154.7 1643.0 150.0Z"/><path d="M1709.0 190.0C1710.2 192.5 1712.7 202.0 1716.0 205.0C1719.3 208.0 1723.7 208.7 1729.0 208.0C1734.3 207.3 1740.2 204.3 1748.0 201.0C1755.8 197.7 1767.2 193.3 1776.0 188.0C1784.8 182.7 1799.3 172.5 1801.0 169.0C1802.7 165.5 1793.2 165.8 1786.0 167.0C1778.8 168.2 1767.5 172.8 1758.0 176.0C1748.5 179.2 1736.0 184.0 1729.0 186.0C1722.0 188.0 1718.2 187.7 1716.0 188.0Z"/><path d="M1782.0 150.0C1782.7 151.3 1782.2 156.2 1786.0 158.0C1789.8 159.8 1796.2 161.3 1805.0 161.0C1813.8 160.7 1831.5 157.8 1839.0 156.0C1846.5 154.2 1848.2 151.0 1850.0 150.0Z"/><path d="M1722.0 150.0C1723.0 151.3 1724.7 157.2 1728.0 158.0C1731.3 158.8 1738.3 156.3 1742.0 155.0C1745.7 153.7 1748.7 150.8 1750.0 150.0Z"/><path d="M1074.0 204.0C1074.5 205.7 1075.7 211.0 1077.0 214.0C1078.3 217.0 1080.5 219.5 1082.0 222.0C1083.5 224.5 1084.3 228.5 1086.0 229.0C1087.7 229.5 1091.2 227.5 1092.0 225.0C1092.8 222.5 1092.3 216.2 1091.0 214.0C1089.7 211.8 1086.2 213.8 1084.0 212.0C1081.8 210.2 1079.0 204.5 1078.0 203.0Z"/><path d="M1096.0 240.0C1096.3 241.2 1097.2 246.7 1098.0 247.0C1098.8 247.3 1100.5 242.8 1101.0 242.0Z"/><path d="M1067.0 275.0C1067.3 276.5 1068.0 283.8 1069.0 284.0C1070.0 284.2 1072.3 277.3 1073.0 276.0Z"/><path d="M1839.0 272.0C1839.7 274.2 1841.5 280.3 1843.0 285.0C1844.5 289.7 1846.5 294.2 1848.0 300.0C1849.5 305.8 1850.0 316.7 1852.0 320.0C1854.0 323.3 1859.3 323.3 1860.0 320.0C1860.7 316.7 1857.7 305.8 1856.0 300.0C1854.3 294.2 1851.8 289.7 1850.0 285.0C1848.2 280.3 1845.8 274.2 1845.0 272.0Z"/><path d="M1856.0 270.0C1857.0 272.0 1859.5 279.0 1862.0 282.0C1864.5 285.0 1870.3 289.0 1871.0 288.0C1871.7 287.0 1866.8 278.0 1866.0 276.0Z"/><path d="M1869.0 345.0C1867.2 346.2 1861.5 349.2 1858.0 352.0C1854.5 354.8 1848.3 359.7 1848.0 362.0C1847.7 364.3 1853.0 366.7 1856.0 366.0C1859.0 365.3 1863.3 360.3 1866.0 358.0C1868.7 355.7 1871.0 353.0 1872.0 352.0Z"/><path d="M1895.0 276.0C1893.2 277.0 1887.0 279.3 1884.0 282.0C1881.0 284.7 1877.7 288.2 1877.0 292.0C1876.3 295.8 1880.7 301.2 1880.0 305.0C1879.3 308.8 1874.8 312.5 1873.0 315.0C1871.2 317.5 1870.7 316.0 1869.0 320.0C1867.3 324.0 1863.0 331.8 1863.0 339.0C1863.0 346.2 1871.2 355.8 1869.0 363.0C1866.8 370.2 1855.7 376.7 1850.0 382.0C1844.3 387.3 1842.3 389.7 1835.0 395.0C1827.7 400.3 1813.0 408.3 1806.0 414.0C1799.0 419.7 1797.7 424.3 1793.0 429.0C1788.3 433.7 1783.7 437.7 1778.0 442.0C1772.3 446.3 1763.7 450.2 1759.0 455.0C1754.3 459.8 1751.8 465.2 1750.0 471.0C1748.2 476.8 1723.8 486.8 1748.0 490.0C1772.2 493.2 1870.5 490.0 1895.0 490.0L1895 490L1895 276Z"/><path d="M990.0 461.0L993.8 463.0L996.0 467.0L998.0 475.0L995.6 480.0L997.0 487.5L996.0 490.0L990.0 490.0Z"/><path d="M1033.8 466.9L1037.5 467.5L1043.0 470.6L1049.4 472.5L1052.5 470.6L1058.8 473.0L1060.6 477.5L1068.0 478.8L1071.9 482.5L1070.6 490.0L1033.0 490.0L1033.0 477.5L1034.4 470.0Z"/><path d="M1013.8 447.5L1016.0 448.0L1021.0 452.5L1020.0 455.0L1022.5 460.0L1017.5 460.6L1017.0 456.0L1014.4 452.5Z"/></g><g fill="#d3e8cf"><path d="M1043.8 453.0L1052.5 454.4L1073.0 464.4L1065.0 469.4L1060.6 473.8L1052.5 470.6L1049.4 472.5L1043.0 467.5Z"/><path d="M1027.0 461.0L1034.0 457.5L1037.5 467.5L1033.8 466.9L1033.0 477.5L1030.0 475.0L1030.0 465.0Z"/></g><g fill="none" stroke="#b4b4b4" stroke-width=".85" stroke-dasharray="2 2"><path d="M990.0 193.0L1114.0 193.0"/><path d="M1050.6 193.0L1050.6 331.0"/><path d="M1114.0 150.0L1114.0 221.5"/><path d="M1114.0 221.5L1300.0 221.5"/><path d="M1157.5 221.5L1157.5 477.0"/><path d="M1264.0 150.0L1264.0 221.5"/><path d="M1264.0 164.0L1380.0 164.0"/><path d="M1290.0 221.5L1307.0 221.5L1307.0 331.0"/><path d="M1307.0 249.0L1432.0 249.0"/><path d="M1060.0 331.0L1465.0 331.0"/><path d="M1285.5 331.0L1285.5 460.0"/><path d="M1214.0 460.0L1285.5 460.0"/><path d="M1290.0 344.0L1350.0 344.0L1350.0 394.0"/><path d="M1467.0 331.0L1467.0 420.0"/><path d="M1467.0 344.0L1562.0 344.0"/><path d="M1478.0 420.0L1478.0 461.0"/><path d="M1478.0 435.0L1538.0 435.0"/><path d="M1531.0 485.6L1572.0 485.6"/><path d="M1561.0 384.0L1712.0 384.0"/><path d="M1590.0 342.6L1867.0 342.6"/><path d="M1603.0 384.0L1603.0 490.0"/><path d="M1597.0 485.6L1669.0 485.6"/><path d="M1550.0 178.0L1611.0 178.0"/><path d="M1635.0 200.0L1703.0 200.0"/><path d="M1616.5 200.0L1616.5 282.0"/><path d="M1675.0 200.0L1675.0 270.0"/><path d="M1765.0 186.0L1765.0 255.0"/><path d="M1765.0 256.0L1869.0 256.0"/><path d="M1781.0 192.0L1848.0 192.0"/><path d="M1441.0 232.0L1529.0 232.0"/><path d="M1466.0 275.0L1466.0 331.0"/><path d="M1350.0 394.0C1352.5 394.8 1359.7 396.8 1365.0 399.0C1370.3 401.2 1377.0 404.8 1382.0 407.0C1387.0 409.2 1390.0 411.5 1395.0 412.0C1400.0 412.5 1404.3 410.0 1412.0 410.0C1419.7 410.0 1434.0 412.0 1441.0 412.0C1448.0 412.0 1449.3 409.0 1454.0 410.0C1458.7 411.0 1466.5 416.7 1469.0 418.0"/><path d="M1478.0 461.0C1479.7 464.2 1486.3 475.2 1488.0 480.0C1489.7 484.8 1488.0 488.3 1488.0 490.0"/><path d="M1562.0 344.0C1561.2 346.3 1555.8 354.2 1557.0 358.0C1558.2 361.8 1568.3 363.0 1569.0 367.0C1569.7 371.0 1565.2 375.7 1561.0 382.0C1556.8 388.3 1547.5 398.7 1544.0 405.0C1540.5 411.3 1541.0 415.0 1540.0 420.0C1539.0 425.0 1537.7 429.7 1538.0 435.0C1538.3 440.3 1543.2 444.5 1542.0 452.0C1540.8 459.5 1532.8 475.3 1531.0 480.0"/><path d="M1660.0 384.0C1662.2 395.3 1671.8 437.5 1673.0 452.0C1674.2 466.5 1667.7 465.3 1667.0 471.0C1666.3 476.7 1668.7 483.5 1669.0 486.0"/><path d="M1712.0 395.0C1715.2 398.8 1724.0 408.5 1731.0 418.0C1738.0 427.5 1750.2 446.3 1754.0 452.0"/><path d="M1712.0 382.0C1713.7 381.0 1714.5 376.7 1722.0 376.0C1729.5 375.3 1750.5 376.0 1757.0 378.0C1763.5 380.0 1756.8 386.3 1761.0 388.0C1765.2 389.7 1773.8 383.7 1782.0 388.0C1790.2 392.3 1805.3 409.7 1810.0 414.0"/><path d="M1675.0 270.0C1677.8 272.0 1686.0 279.3 1692.0 282.0C1698.0 284.7 1704.8 282.8 1711.0 286.0C1717.2 289.2 1726.8 295.5 1729.0 301.0C1731.2 306.5 1722.2 313.3 1724.0 319.0C1725.8 324.7 1734.0 333.2 1740.0 335.0C1746.0 336.8 1756.7 330.8 1760.0 330.0"/><path d="M1380.0 164.0C1382.5 164.7 1389.7 167.2 1395.0 168.0C1400.3 168.8 1407.2 167.7 1412.0 169.0C1416.8 170.3 1420.5 171.0 1424.0 176.0C1427.5 181.0 1430.5 194.0 1433.0 199.0C1435.5 204.0 1437.7 201.0 1439.0 206.0C1440.3 211.0 1438.5 222.7 1441.0 229.0C1443.5 235.3 1449.8 239.5 1454.0 244.0C1458.2 248.5 1464.0 250.8 1466.0 256.0C1468.0 261.2 1466.0 271.8 1466.0 275.0"/><path d="M1538.0 150.0C1538.7 153.2 1539.3 163.3 1542.0 169.0C1544.7 174.7 1551.2 179.7 1554.0 184.0C1556.8 188.3 1559.7 191.3 1559.0 195.0C1558.3 198.7 1552.8 203.5 1550.0 206.0C1547.2 208.5 1543.7 206.8 1542.0 210.0C1540.3 213.2 1541.5 220.5 1540.0 225.0C1538.5 229.5 1533.5 232.0 1533.0 237.0C1532.5 242.0 1534.2 248.8 1537.0 255.0C1539.8 261.2 1546.0 269.5 1550.0 274.0C1554.0 278.5 1560.2 278.2 1561.0 282.0C1561.8 285.8 1553.2 291.7 1555.0 297.0C1556.8 302.3 1567.8 309.3 1572.0 314.0C1576.2 318.7 1579.5 320.7 1580.0 325.0C1580.5 329.3 1575.8 337.5 1575.0 340.0"/><path d="M990.0 337.0C995.3 342.0 1013.8 358.8 1022.0 367.0C1030.2 375.2 1034.7 380.2 1039.0 386.0C1043.3 391.8 1047.7 398.0 1048.0 402.0C1048.3 406.0 1042.3 406.2 1041.0 410.0C1039.7 413.8 1040.7 420.8 1040.0 425.0C1039.3 429.2 1036.8 432.5 1037.0 435.0C1037.2 437.5 1040.3 439.2 1041.0 440.0"/><path d="M1050.6 331.0C1049.7 333.3 1046.8 340.2 1045.0 345.0C1043.2 349.8 1041.0 353.2 1040.0 360.0C1039.0 366.8 1039.2 381.7 1039.0 386.0"/><path d="M1616.5 282.0C1615.4 284.2 1612.8 291.2 1610.0 295.0C1607.2 298.8 1603.3 301.2 1600.0 305.0C1596.7 308.8 1593.3 314.7 1590.0 318.0C1586.7 321.3 1581.7 323.8 1580.0 325.0"/><path d="M1765.0 255.0C1766.7 258.3 1770.8 270.0 1775.0 275.0C1779.2 280.0 1784.2 285.8 1790.0 285.0C1795.8 284.2 1803.3 273.8 1810.0 270.0C1816.7 266.2 1825.0 261.7 1830.0 262.0C1835.0 262.3 1838.3 270.3 1840.0 272.0"/><path d="M1790.0 285.0C1791.7 287.5 1795.8 295.8 1800.0 300.0C1804.2 304.2 1809.2 310.0 1815.0 310.0C1820.8 310.0 1830.0 300.0 1835.0 300.0C1840.0 300.0 1843.3 308.3 1845.0 310.0"/><path d="M1869.0 256.0C1869.5 258.0 1872.2 264.0 1872.0 268.0C1871.8 272.0 1868.7 278.0 1868.0 280.0"/></g><g fill="none" stroke="#9a9a9a" stroke-width="1"><path d="M990.0 446.0L1036.0 442.0L1034.0 448.0L1095.0 471.0L1135.0 477.0L1175.0 477.0L1175.0 466.0L1212.0 466.0L1225.0 478.0L1238.0 490.0"/><path d="M1711.0 184.0L1712.0 197.0L1726.0 201.0L1767.0 184.0L1801.0 168.0L1795.0 152.0"/></g><g fill="none" stroke="#f9d978" stroke-width="1.7" stroke-linecap="round" stroke-linejoin="round"><path d="M990.0 232.0C993.2 230.0 1001.8 222.3 1009.0 220.0C1016.2 217.7 1026.2 216.8 1033.0 218.0C1039.8 219.2 1042.2 225.3 1050.0 227.0C1057.8 228.7 1072.5 228.5 1080.0 228.0C1087.5 227.5 1092.5 224.7 1095.0 224.0"/><path d="M1097.0 223.0C1099.8 221.5 1106.7 216.8 1114.0 214.0C1121.3 211.2 1130.3 208.2 1141.0 206.0C1151.7 203.8 1166.2 202.0 1178.0 201.0C1189.8 200.0 1202.5 197.8 1212.0 200.0C1221.5 202.2 1229.3 211.0 1235.0 214.0C1240.7 217.0 1235.2 217.5 1246.0 218.0C1256.8 218.5 1289.5 217.0 1300.0 217.0C1310.5 217.0 1303.5 218.0 1309.0 218.0C1314.5 218.0 1324.2 215.2 1333.0 217.0C1341.8 218.8 1353.5 227.5 1362.0 229.0C1370.5 230.5 1374.3 226.7 1384.0 226.0C1393.7 225.3 1412.2 226.3 1420.0 225.0C1427.8 223.7 1427.8 221.2 1431.0 218.0C1434.2 214.8 1431.2 208.2 1439.0 206.0C1446.8 203.8 1469.8 205.8 1478.0 205.0C1486.2 204.2 1475.3 201.3 1488.0 201.0C1500.7 200.7 1538.0 204.0 1554.0 203.0C1570.0 202.0 1576.3 196.7 1584.0 195.0C1591.7 193.3 1594.8 192.8 1600.0 193.0C1605.2 193.2 1612.5 195.5 1615.0 196.0"/><path d="M1086.0 150.0C1087.2 158.8 1091.2 190.8 1093.0 203.0C1094.8 215.2 1095.7 216.2 1097.0 223.0C1098.3 229.8 1101.3 237.3 1101.0 244.0C1100.7 250.7 1097.8 256.7 1095.0 263.0C1092.2 269.3 1086.8 275.7 1084.0 282.0C1081.2 288.3 1080.5 294.7 1078.0 301.0C1075.5 307.3 1072.7 314.7 1069.0 320.0C1065.3 325.3 1062.8 327.5 1056.0 333.0C1049.2 338.5 1034.0 347.0 1028.0 353.0C1022.0 359.0 1025.0 363.8 1020.0 369.0C1015.0 374.2 1003.0 381.2 998.0 384.0C993.0 386.8 991.3 385.7 990.0 386.0"/><path d="M1084.0 288.0C1087.2 287.0 1092.0 283.7 1103.0 282.0C1114.0 280.3 1140.7 280.0 1150.0 278.0C1159.3 276.0 1154.3 272.5 1159.0 270.0C1163.7 267.5 1170.2 265.0 1178.0 263.0C1185.8 261.0 1194.7 259.3 1206.0 258.0C1217.3 256.7 1236.5 254.8 1246.0 255.0C1255.5 255.2 1258.7 256.7 1263.0 259.0C1267.3 261.3 1267.5 267.3 1272.0 269.0C1276.5 270.7 1280.7 269.2 1290.0 269.0C1299.3 268.8 1320.2 267.2 1328.0 268.0C1335.8 268.8 1330.8 272.0 1337.0 274.0C1343.2 276.0 1354.0 279.2 1365.0 280.0C1376.0 280.8 1393.5 279.8 1403.0 279.0C1412.5 278.2 1411.7 275.7 1422.0 275.0C1432.3 274.3 1452.5 274.5 1465.0 275.0C1477.5 275.5 1485.3 277.2 1497.0 278.0C1508.7 278.8 1525.0 278.7 1535.0 280.0C1545.0 281.3 1546.2 286.0 1557.0 286.0C1567.8 286.0 1593.2 285.2 1600.0 280.0C1606.8 274.8 1589.8 259.3 1597.7 255.0C1605.5 250.7 1632.9 254.3 1647.0 254.0C1661.1 253.7 1671.2 254.0 1682.0 253.0C1692.8 252.0 1701.0 249.2 1712.0 248.0C1723.0 246.8 1737.8 246.0 1748.0 246.0C1758.2 246.0 1763.5 247.3 1773.0 248.0C1782.5 248.7 1795.0 251.3 1805.0 250.0C1815.0 248.7 1823.7 242.8 1833.0 240.0C1842.3 237.2 1850.7 235.5 1861.0 233.0C1871.3 230.5 1889.3 226.3 1895.0 225.0"/><path d="M1214.0 150.0C1214.3 152.5 1211.7 161.2 1216.0 165.0C1220.3 168.8 1235.0 167.7 1240.0 173.0C1245.0 178.3 1245.2 183.3 1246.0 197.0C1246.8 210.7 1244.7 240.8 1245.0 255.0C1245.3 269.2 1246.7 271.2 1248.0 282.0C1249.3 292.8 1251.8 310.5 1253.0 320.0C1254.2 329.5 1255.5 332.7 1255.0 339.0C1254.5 345.3 1253.0 352.7 1250.0 358.0C1247.0 363.3 1241.8 369.2 1237.0 371.0C1232.2 372.8 1225.5 367.8 1221.0 369.0C1216.5 370.2 1212.5 373.7 1210.0 378.0C1207.5 382.3 1208.2 388.3 1206.0 395.0C1203.8 401.7 1199.0 411.0 1197.0 418.0C1195.0 425.0 1193.0 431.7 1194.0 437.0C1195.0 442.3 1200.0 445.0 1203.0 450.0C1206.0 455.0 1210.5 464.2 1212.0 467.0"/><path d="M1246.0 254.0C1248.8 252.0 1256.7 246.2 1263.0 242.0C1269.3 237.8 1277.8 232.3 1284.0 229.0C1290.2 225.7 1297.3 223.2 1300.0 222.0"/><path d="M990.0 386.0C993.2 384.7 1001.2 377.2 1009.0 378.0C1016.8 378.8 1030.5 389.3 1037.0 391.0C1043.5 392.7 1045.8 390.2 1048.0 388.0C1050.2 385.8 1045.5 380.0 1050.0 378.0C1054.5 376.0 1066.2 376.0 1075.0 376.0C1083.8 376.0 1093.3 376.3 1103.0 378.0C1112.7 379.7 1123.7 387.2 1133.0 386.0C1142.3 384.8 1153.0 373.7 1159.0 371.0C1165.0 368.3 1164.5 368.3 1169.0 370.0C1173.5 371.7 1179.2 379.2 1186.0 381.0C1192.8 382.8 1199.3 380.3 1210.0 381.0C1220.7 381.7 1236.7 385.8 1250.0 385.0C1263.3 384.2 1280.2 377.2 1290.0 376.0C1299.8 374.8 1299.0 377.8 1309.0 378.0C1319.0 378.2 1340.7 378.2 1350.0 377.0C1359.3 375.8 1356.2 371.5 1365.0 371.0C1373.8 370.5 1385.7 373.8 1403.0 374.0C1420.3 374.2 1453.3 371.8 1469.0 372.0C1484.7 372.2 1489.8 373.3 1497.0 375.0C1504.2 376.7 1509.2 379.5 1512.0 382.0C1514.8 384.5 1510.2 389.3 1514.0 390.0C1517.8 390.7 1527.2 387.7 1535.0 386.0C1542.8 384.3 1550.2 383.8 1561.0 380.0C1571.8 376.2 1588.2 367.5 1600.0 363.0C1611.8 358.5 1621.7 354.5 1632.0 353.0C1642.3 351.5 1653.3 352.3 1662.0 354.0C1670.7 355.7 1677.2 362.3 1684.0 363.0C1690.8 363.7 1696.7 360.8 1703.0 358.0C1709.3 355.2 1712.7 350.5 1722.0 346.0C1731.3 341.5 1746.5 334.0 1759.0 331.0C1771.5 328.0 1784.7 329.8 1797.0 328.0C1809.3 326.2 1827.0 321.3 1833.0 320.0"/><path d="M1103.0 378.0C1102.7 380.3 1102.8 387.8 1101.0 392.0C1099.2 396.2 1093.3 397.7 1092.0 403.0C1090.7 408.3 1092.8 420.5 1093.0 424.0"/><path d="M990.0 412.0C994.7 413.0 1007.0 417.0 1018.0 418.0C1029.0 419.0 1043.5 417.0 1056.0 418.0C1068.5 419.0 1085.2 420.3 1093.0 424.0C1100.8 427.7 1099.2 434.8 1103.0 440.0C1106.8 445.2 1111.0 451.8 1116.0 455.0C1121.0 458.2 1128.8 459.2 1133.0 459.0C1137.2 458.8 1136.7 455.2 1141.0 454.0C1145.3 452.8 1154.3 451.7 1159.0 452.0C1163.7 452.3 1161.3 455.7 1169.0 456.0C1176.7 456.3 1197.8 452.3 1205.0 454.0C1212.2 455.7 1208.7 462.0 1212.0 466.0C1215.3 470.0 1218.2 475.7 1225.0 478.0C1231.8 480.3 1245.2 480.3 1253.0 480.0C1260.8 479.7 1264.2 477.5 1272.0 476.0C1279.8 474.5 1295.3 471.8 1300.0 471.0"/><path d="M990.0 440.0C997.8 440.3 1022.8 442.5 1037.0 442.0C1051.2 441.5 1064.0 437.3 1075.0 437.0C1086.0 436.7 1098.3 439.5 1103.0 440.0"/><path d="M1028.0 353.0C1029.7 353.8 1036.7 354.2 1038.0 358.0C1039.3 361.8 1036.3 373.0 1036.0 376.0"/><path d="M1420.0 150.0C1420.0 153.2 1418.2 162.7 1420.0 169.0C1421.8 175.3 1427.8 181.8 1431.0 188.0C1434.2 194.2 1437.3 199.2 1439.0 206.0C1440.7 212.8 1439.2 223.0 1441.0 229.0C1442.8 235.0 1446.0 237.7 1450.0 242.0C1454.0 246.3 1462.5 249.5 1465.0 255.0C1467.5 260.5 1465.0 271.7 1465.0 275.0"/><path d="M1492.0 150.0C1491.8 153.2 1491.7 160.5 1491.0 169.0C1490.3 177.5 1489.5 191.7 1488.0 201.0C1486.5 210.3 1483.7 217.8 1482.0 225.0C1480.3 232.2 1480.8 235.7 1478.0 244.0C1475.2 252.3 1466.2 267.2 1465.0 275.0C1463.8 282.8 1469.8 283.5 1471.0 291.0C1472.2 298.5 1472.0 313.7 1472.0 320.0C1472.0 326.3 1470.7 324.3 1471.0 329.0C1471.3 333.7 1473.7 340.7 1474.0 348.0C1474.3 355.3 1473.2 368.8 1473.0 373.0"/><path d="M1403.0 279.0C1402.7 281.3 1400.0 288.8 1401.0 293.0C1402.0 297.2 1408.0 299.5 1409.0 304.0C1410.0 308.5 1407.2 311.0 1407.0 320.0C1406.8 329.0 1408.7 349.0 1408.0 358.0C1407.3 367.0 1402.7 367.8 1403.0 374.0C1403.3 380.2 1408.7 388.3 1410.0 395.0C1411.3 401.7 1409.7 406.5 1411.0 414.0C1412.3 421.5 1417.8 432.5 1418.0 440.0C1418.2 447.5 1413.8 452.0 1412.0 459.0C1410.2 466.0 1409.8 477.8 1407.0 482.0C1404.2 486.2 1397.0 483.7 1395.0 484.0"/><path d="M1465.0 275.0C1461.0 276.2 1447.5 277.7 1441.0 282.0C1434.5 286.3 1431.7 295.7 1426.0 301.0C1420.3 306.3 1410.2 311.8 1407.0 314.0"/><path d="M1557.0 286.0C1553.3 288.5 1542.8 297.0 1535.0 301.0C1527.2 305.0 1515.3 306.8 1510.0 310.0C1504.7 313.2 1505.2 317.7 1503.0 320.0C1500.8 322.3 1502.3 322.5 1497.0 324.0C1491.7 325.5 1477.3 327.2 1471.0 329.0C1464.7 330.8 1464.7 330.8 1459.0 335.0C1453.3 339.2 1446.3 347.5 1437.0 354.0C1427.7 360.5 1411.8 367.7 1403.0 374.0C1394.2 380.3 1387.5 385.7 1384.0 392.0C1380.5 398.3 1382.3 408.7 1382.0 412.0"/><path d="M1584.0 150.0C1584.2 157.5 1585.0 181.2 1585.0 195.0C1585.0 208.8 1586.2 223.0 1584.0 233.0C1581.8 243.0 1575.8 246.2 1572.0 255.0C1568.2 263.8 1562.8 280.8 1561.0 286.0"/><path d="M1514.0 179.0C1515.8 180.2 1522.5 182.3 1525.0 186.0C1527.5 189.7 1528.3 198.5 1529.0 201.0"/><path d="M1554.0 203.0C1554.5 206.2 1554.0 217.3 1557.0 222.0C1560.0 226.7 1567.5 229.2 1572.0 231.0C1576.5 232.8 1579.3 234.0 1584.0 233.0C1588.7 232.0 1597.3 226.3 1600.0 225.0"/><path d="M1535.0 248.0C1535.3 249.2 1533.8 253.2 1537.0 255.0C1540.2 256.8 1548.2 259.0 1554.0 259.0C1559.8 259.0 1564.3 256.2 1572.0 255.0C1579.7 253.8 1587.5 252.2 1600.0 252.0C1612.5 251.8 1639.2 253.7 1647.0 254.0"/><path d="M1418.0 440.0C1420.5 438.7 1426.7 433.7 1433.0 432.0C1439.3 430.3 1449.7 431.5 1456.0 430.0C1462.3 428.5 1467.3 424.3 1471.0 423.0C1474.7 421.7 1473.7 425.0 1478.0 422.0C1482.3 419.0 1491.3 410.0 1497.0 405.0C1502.7 400.0 1509.5 394.2 1512.0 392.0"/><path d="M1290.0 471.0C1294.7 468.5 1308.7 459.8 1318.0 456.0C1327.3 452.2 1336.5 449.0 1346.0 448.0C1355.5 447.0 1366.8 451.0 1375.0 450.0C1383.2 449.0 1387.8 443.7 1395.0 442.0C1402.2 440.3 1410.3 439.3 1418.0 440.0C1425.7 440.7 1434.2 444.3 1441.0 446.0C1447.8 447.7 1452.2 449.7 1459.0 450.0C1465.8 450.3 1472.5 448.7 1482.0 448.0C1491.5 447.3 1505.7 445.3 1516.0 446.0C1526.3 446.7 1536.8 451.3 1544.0 452.0C1551.2 452.7 1549.7 450.3 1559.0 450.0C1568.3 449.7 1590.2 452.8 1600.0 450.0C1609.8 447.2 1612.8 437.7 1618.0 433.0C1623.2 428.3 1628.8 423.8 1631.0 422.0"/><path d="M1478.0 422.0C1478.3 425.0 1479.0 434.3 1480.0 440.0C1481.0 445.7 1481.2 450.8 1484.0 456.0C1486.8 461.2 1491.7 465.3 1497.0 471.0C1502.3 476.7 1512.8 486.8 1516.0 490.0"/><path d="M1420.0 444.0C1421.5 447.2 1425.5 455.3 1429.0 463.0C1432.5 470.7 1439.0 485.5 1441.0 490.0"/><path d="M1310.0 378.0C1310.7 381.5 1313.8 391.7 1314.0 399.0C1314.2 406.3 1311.5 418.2 1311.0 422.0"/><path d="M1561.0 380.0C1562.0 385.7 1567.3 402.3 1567.0 414.0C1566.7 425.7 1561.2 440.5 1559.0 450.0C1556.8 459.5 1555.2 464.3 1554.0 471.0C1552.8 477.7 1552.3 486.8 1552.0 490.0"/><path d="M1561.0 380.0C1562.5 376.3 1568.2 364.8 1570.0 358.0C1571.8 351.2 1570.3 345.3 1572.0 339.0C1573.7 332.7 1577.7 323.2 1580.0 320.0C1582.3 316.8 1584.7 324.8 1586.0 320.0C1587.3 315.2 1586.0 301.8 1588.0 291.0C1590.0 280.2 1594.8 266.0 1598.0 255.0C1601.2 244.0 1604.2 234.8 1607.0 225.0C1609.8 215.2 1613.7 200.8 1615.0 196.0"/><path d="M1548.0 361.0L1561.0 380.0"/><path d="M1514.0 390.0L1522.0 405.0"/><path d="M1591.0 450.0C1589.8 453.5 1587.2 464.3 1584.0 471.0C1580.8 477.7 1574.0 486.8 1572.0 490.0"/><path d="M1572.0 384.0C1574.0 385.8 1579.3 392.2 1584.0 395.0C1588.7 397.8 1592.2 396.5 1600.0 401.0C1607.8 405.5 1625.8 418.5 1631.0 422.0"/><path d="M1615.0 196.0C1620.0 197.7 1635.3 205.2 1645.0 206.0C1654.7 206.8 1663.7 201.7 1673.0 201.0C1682.3 200.3 1693.2 200.8 1701.0 202.0C1708.8 203.2 1713.3 206.7 1720.0 208.0C1726.7 209.3 1733.2 208.7 1741.0 210.0C1748.8 211.3 1756.3 215.3 1767.0 216.0C1777.7 216.7 1792.5 214.0 1805.0 214.0C1817.5 214.0 1831.0 217.3 1842.0 216.0C1853.0 214.7 1862.2 208.2 1871.0 206.0C1879.8 203.8 1891.0 203.5 1895.0 203.0"/><path d="M1615.0 196.0C1616.2 200.8 1616.7 215.3 1622.0 225.0C1627.3 234.7 1642.3 244.5 1647.0 254.0C1651.7 263.5 1648.8 271.0 1650.0 282.0C1651.2 293.0 1656.8 313.7 1654.0 320.0C1651.2 326.3 1636.7 314.5 1633.0 320.0C1629.3 325.5 1632.5 342.0 1632.0 353.0C1631.5 364.0 1630.2 374.5 1630.0 386.0C1629.8 397.5 1629.5 411.7 1631.0 422.0C1632.5 432.3 1639.5 439.8 1639.0 448.0C1638.5 456.2 1633.0 464.0 1628.0 471.0C1623.0 478.0 1612.2 486.8 1609.0 490.0"/><path d="M1647.0 254.0C1650.0 249.2 1660.7 233.8 1665.0 225.0C1669.3 216.2 1671.0 209.5 1673.0 201.0C1675.0 192.5 1675.8 182.5 1677.0 174.0C1678.2 165.5 1679.5 154.0 1680.0 150.0"/><path d="M1711.0 184.0C1709.7 187.2 1705.0 196.2 1703.0 203.0C1701.0 209.8 1701.2 219.7 1699.0 225.0C1696.8 230.3 1692.5 227.2 1690.0 235.0C1687.5 242.8 1685.7 261.0 1684.0 272.0C1682.3 283.0 1680.3 293.0 1680.0 301.0C1679.7 309.0 1680.3 316.8 1682.0 320.0C1683.7 323.2 1689.0 316.2 1690.0 320.0C1691.0 323.8 1689.0 335.8 1688.0 343.0C1687.0 350.2 1687.8 356.2 1684.0 363.0C1680.2 369.8 1666.5 377.7 1665.0 384.0C1663.5 390.3 1671.8 395.7 1675.0 401.0C1678.2 406.3 1680.7 409.7 1684.0 416.0C1687.3 422.3 1692.8 431.5 1695.0 439.0C1697.2 446.5 1695.7 454.8 1697.0 461.0C1698.3 467.2 1701.2 471.2 1703.0 476.0C1704.8 480.8 1707.2 487.7 1708.0 490.0"/><path d="M1741.0 210.0C1739.0 213.2 1733.8 222.7 1729.0 229.0C1724.2 235.3 1717.5 242.3 1712.0 248.0C1706.5 253.7 1701.0 259.0 1696.0 263.0C1691.0 267.0 1684.3 270.5 1682.0 272.0"/><path d="M1741.0 210.0C1741.8 214.2 1744.8 225.5 1746.0 235.0C1747.2 244.5 1749.2 257.7 1748.0 267.0C1746.8 276.3 1739.7 282.2 1739.0 291.0C1738.3 299.8 1740.7 315.2 1744.0 320.0C1747.3 324.8 1756.2 315.3 1759.0 320.0C1761.8 324.7 1761.0 338.3 1761.0 348.0C1761.0 357.7 1759.8 368.5 1759.0 378.0C1758.2 387.5 1755.0 397.2 1756.0 405.0C1757.0 412.8 1763.5 421.7 1765.0 425.0"/><path d="M1773.0 193.0C1773.0 196.8 1772.2 208.2 1773.0 216.0C1773.8 223.8 1778.0 232.2 1778.0 240.0C1778.0 247.8 1774.8 249.7 1773.0 263.0C1771.2 276.3 1768.0 310.5 1767.0 320.0"/><path d="M1824.0 169.0C1825.5 173.7 1830.0 189.2 1833.0 197.0C1836.0 204.8 1842.0 208.8 1842.0 216.0C1842.0 223.2 1836.7 232.2 1833.0 240.0C1829.3 247.8 1824.7 254.5 1820.0 263.0C1815.3 271.5 1809.2 281.5 1805.0 291.0C1800.8 300.5 1802.7 313.3 1795.0 320.0C1787.3 326.7 1765.0 329.2 1759.0 331.0"/><path d="M1895.0 225.0C1892.5 228.8 1887.2 241.0 1880.0 248.0C1872.8 255.0 1858.8 262.0 1852.0 267.0C1845.2 272.0 1842.2 272.3 1839.0 278.0C1835.8 283.7 1835.0 294.0 1833.0 301.0C1831.0 308.0 1827.0 316.8 1827.0 320.0C1827.0 323.2 1833.3 315.3 1833.0 320.0C1832.7 324.7 1827.8 338.7 1825.0 348.0C1822.2 357.3 1820.7 368.2 1816.0 376.0C1811.3 383.8 1805.5 386.8 1797.0 395.0C1788.5 403.2 1772.2 414.3 1765.0 425.0C1757.8 435.7 1757.2 449.8 1754.0 459.0C1750.8 468.2 1747.7 474.8 1746.0 480.0C1744.3 485.2 1744.3 488.3 1744.0 490.0"/><path d="M1720.0 208.0C1724.7 207.2 1738.7 206.3 1748.0 203.0C1757.3 199.7 1768.2 193.7 1776.0 188.0C1783.8 182.3 1787.0 173.5 1795.0 169.0C1803.0 164.5 1807.3 162.7 1824.0 161.0C1840.7 159.3 1883.2 159.3 1895.0 159.0"/><path d="M1615.0 196.0C1619.7 192.3 1632.7 177.7 1643.0 174.0C1653.3 170.3 1665.7 172.3 1677.0 174.0C1688.3 175.7 1705.3 182.3 1711.0 184.0"/><path d="M1654.0 161.0C1658.7 160.5 1672.5 154.5 1682.0 158.0C1691.5 161.5 1706.2 178.0 1711.0 182.0"/><path d="M1560.0 229.0C1566.3 230.8 1583.5 235.8 1598.0 240.0C1612.5 244.2 1633.0 248.7 1647.0 254.0C1661.0 259.3 1676.2 269.0 1682.0 272.0"/><path d="M1560.0 291.0C1567.8 291.7 1591.3 294.0 1607.0 295.0C1622.7 296.0 1641.2 297.3 1654.0 297.0C1666.8 296.7 1673.0 293.3 1684.0 293.0C1695.0 292.7 1709.3 292.2 1720.0 295.0C1730.7 297.8 1735.5 306.5 1748.0 310.0C1760.5 313.5 1780.8 317.5 1795.0 316.0C1809.2 314.5 1826.7 303.5 1833.0 301.0"/><path d="M1560.0 206.0C1564.7 205.8 1578.8 206.7 1588.0 205.0C1597.2 203.3 1610.5 197.5 1615.0 196.0"/><path d="M1584.0 206.0L1577.0 229.0"/><path d="M1615.0 196.0C1613.7 191.5 1608.7 176.7 1607.0 169.0C1605.3 161.3 1605.3 153.2 1605.0 150.0"/><path d="M1824.0 161.0C1827.0 163.8 1834.2 170.5 1842.0 178.0C1849.8 185.5 1866.2 201.3 1871.0 206.0"/><path d="M1767.0 216.0C1773.3 217.5 1792.5 222.8 1805.0 225.0C1817.5 227.2 1829.5 229.5 1842.0 229.0C1854.5 228.5 1873.7 223.2 1880.0 222.0"/><path d="M1632.0 353.0C1634.3 355.7 1640.5 363.8 1646.0 369.0C1651.5 374.2 1661.8 381.5 1665.0 384.0"/><path d="M1590.0 401.0C1596.8 404.5 1615.3 419.5 1631.0 422.0C1646.7 424.5 1670.5 416.0 1684.0 416.0C1697.5 416.0 1703.5 420.7 1712.0 422.0C1720.5 423.3 1727.2 424.7 1735.0 424.0C1742.8 423.3 1751.8 421.2 1759.0 418.0C1766.2 414.8 1774.8 407.2 1778.0 405.0"/><path d="M1631.0 422.0C1633.5 426.3 1639.0 444.3 1646.0 448.0C1653.0 451.7 1666.7 449.3 1673.0 444.0C1679.3 438.7 1675.8 424.7 1684.0 416.0C1692.2 407.3 1709.5 398.3 1722.0 392.0C1734.5 385.7 1749.7 383.7 1759.0 378.0C1768.3 372.3 1770.2 362.3 1778.0 358.0C1785.8 353.7 1798.2 355.2 1806.0 352.0C1813.8 348.8 1820.5 344.3 1825.0 339.0C1829.5 333.7 1831.7 323.2 1833.0 320.0"/><path d="M1684.0 363.0C1690.3 367.8 1711.7 384.5 1722.0 392.0C1732.3 399.5 1738.8 402.5 1746.0 408.0C1753.2 413.5 1759.7 419.8 1765.0 425.0C1770.3 430.2 1775.8 436.7 1778.0 439.0"/><path d="M1684.0 416.0C1686.5 420.0 1691.2 434.0 1699.0 440.0C1706.8 446.0 1721.8 448.8 1731.0 452.0C1740.2 455.2 1750.2 457.8 1754.0 459.0"/><path d="M1590.0 376.0C1593.2 379.2 1602.2 387.3 1609.0 395.0C1615.8 402.7 1627.3 417.5 1631.0 422.0"/><path d="M1590.0 365.0L1600.0 363.0"/><path d="M1806.0 352.0C1807.0 350.0 1808.0 343.7 1812.0 340.0C1816.0 336.3 1827.0 331.7 1830.0 330.0"/><path d="M1778.0 358.0C1780.0 361.7 1786.8 373.8 1790.0 380.0C1793.2 386.2 1795.8 392.5 1797.0 395.0"/><path d="M1673.0 444.0C1674.2 448.3 1677.2 462.3 1680.0 470.0C1682.8 477.7 1688.3 486.7 1690.0 490.0"/><path d="M1646.0 448.0C1645.0 451.7 1640.2 463.0 1640.0 470.0C1639.8 477.0 1644.2 486.7 1645.0 490.0"/><path d="M1852.0 267.0C1855.0 266.2 1864.5 264.8 1870.0 262.0C1875.5 259.2 1882.5 252.0 1885.0 250.0"/><path d="M1654.0 297.0L1660.0 320.0"/><path d="M1712.0 248.0C1712.7 252.0 1714.7 264.2 1716.0 272.0C1717.3 279.8 1719.3 291.2 1720.0 295.0"/><path d="M1850.0 150.0C1851.0 153.3 1852.5 160.7 1856.0 170.0C1859.5 179.3 1868.5 200.0 1871.0 206.0"/></g><g fill="none" stroke="#f9dc8a" stroke-width="1.25" stroke-linecap="round"><path d="M1560.0 170.0C1563.3 170.3 1573.3 170.3 1580.0 172.0C1586.7 173.7 1594.2 176.0 1600.0 180.0C1605.8 184.0 1612.5 193.3 1615.0 196.0"/><path d="M1560.0 245.0C1562.5 247.8 1568.7 257.8 1575.0 262.0C1581.3 266.2 1590.5 269.0 1598.0 270.0C1605.5 271.0 1611.8 270.7 1620.0 268.0C1628.2 265.3 1642.5 256.3 1647.0 254.0"/><path d="M1598.0 255.0C1598.3 259.2 1598.5 273.3 1600.0 280.0C1601.5 286.7 1605.8 292.5 1607.0 295.0"/><path d="M1622.0 225.0L1600.0 225.0"/><path d="M1665.0 225.0C1669.2 224.5 1684.3 222.0 1690.0 222.0C1695.7 222.0 1692.5 223.8 1699.0 225.0C1705.5 226.2 1721.2 227.3 1729.0 229.0C1736.8 230.7 1743.2 234.0 1746.0 235.0"/><path d="M1650.0 282.0C1652.5 281.0 1659.7 277.7 1665.0 276.0C1670.3 274.3 1679.2 272.7 1682.0 272.0"/><path d="M1684.0 272.0C1686.7 274.2 1694.0 281.2 1700.0 285.0C1706.0 288.8 1716.7 293.3 1720.0 295.0"/><path d="M1696.0 263.0C1700.0 262.8 1711.3 261.3 1720.0 262.0C1728.7 262.7 1739.2 266.8 1748.0 267.0C1756.8 267.2 1768.8 263.7 1773.0 263.0"/><path d="M1746.0 235.0C1748.3 234.5 1754.7 231.2 1760.0 232.0C1765.3 232.8 1775.0 238.7 1778.0 240.0"/><path d="M1805.0 214.0C1805.8 217.0 1810.0 226.0 1810.0 232.0C1810.0 238.0 1804.7 243.7 1805.0 250.0C1805.3 256.3 1812.0 263.2 1812.0 270.0C1812.0 276.8 1806.2 287.5 1805.0 291.0"/><path d="M1842.0 216.0C1843.3 218.7 1846.8 229.2 1850.0 232.0C1853.2 234.8 1859.2 232.8 1861.0 233.0"/><path d="M1833.0 240.0C1835.0 242.0 1841.8 247.5 1845.0 252.0C1848.2 256.5 1850.8 264.5 1852.0 267.0"/><path d="M1778.0 240.0C1781.7 239.7 1790.8 238.0 1800.0 238.0C1809.2 238.0 1827.5 239.7 1833.0 240.0"/><path d="M1773.0 263.0C1775.8 263.8 1782.2 268.0 1790.0 268.0C1797.8 268.0 1815.0 263.8 1820.0 263.0"/><path d="M1739.0 291.0C1741.7 292.5 1750.3 295.2 1755.0 300.0C1759.7 304.8 1765.0 316.7 1767.0 320.0"/><path d="M1805.0 291.0C1806.7 290.0 1809.3 287.2 1815.0 285.0C1820.7 282.8 1835.0 279.2 1839.0 278.0"/><path d="M1701.0 202.0C1701.7 200.0 1703.3 193.0 1705.0 190.0C1706.7 187.0 1710.0 185.0 1711.0 184.0"/><path d="M1645.0 206.0C1646.7 203.3 1653.5 197.5 1655.0 190.0C1656.5 182.5 1654.2 165.8 1654.0 161.0"/><path d="M1677.0 174.0C1679.2 173.3 1684.3 168.7 1690.0 170.0C1695.7 171.3 1707.5 180.0 1711.0 182.0"/><path d="M1620.0 320.0C1620.8 322.5 1623.0 329.5 1625.0 335.0C1627.0 340.5 1630.8 350.0 1632.0 353.0"/><path d="M1654.0 320.0C1656.7 321.7 1664.3 326.2 1670.0 330.0C1675.7 333.8 1685.0 340.8 1688.0 343.0"/><path d="M1662.0 354.0C1663.0 351.7 1663.3 345.7 1668.0 340.0C1672.7 334.3 1686.3 323.3 1690.0 320.0"/><path d="M1703.0 358.0C1704.5 360.3 1708.8 366.3 1712.0 372.0C1715.2 377.7 1720.3 388.7 1722.0 392.0"/><path d="M1722.0 346.0C1725.0 347.0 1733.5 351.7 1740.0 352.0C1746.5 352.3 1757.5 348.7 1761.0 348.0"/><path d="M1761.0 348.0C1765.0 347.5 1777.5 344.3 1785.0 345.0C1792.5 345.7 1802.5 350.8 1806.0 352.0"/><path d="M1797.0 328.0C1797.5 330.0 1798.5 336.0 1800.0 340.0C1801.5 344.0 1805.0 350.0 1806.0 352.0"/><path d="M1816.0 376.0C1818.3 375.0 1825.2 370.7 1830.0 370.0C1834.8 369.3 1842.5 371.7 1845.0 372.0"/><path d="M1797.0 395.0C1798.3 396.7 1804.5 401.2 1805.0 405.0C1805.5 408.8 1800.8 415.8 1800.0 418.0"/><path d="M1735.0 424.0C1736.7 426.7 1741.8 434.2 1745.0 440.0C1748.2 445.8 1752.5 455.8 1754.0 459.0"/><path d="M1712.0 422.0C1712.5 425.0 1711.8 435.0 1715.0 440.0C1718.2 445.0 1728.3 450.0 1731.0 452.0"/><path d="M1697.0 461.0C1700.0 462.2 1706.8 464.8 1715.0 468.0C1723.2 471.2 1740.8 478.0 1746.0 480.0"/><path d="M1639.0 448.0C1641.7 450.3 1651.5 455.0 1655.0 462.0C1658.5 469.0 1659.2 485.3 1660.0 490.0"/><path d="M1631.0 422.0C1627.5 425.0 1615.2 435.3 1610.0 440.0C1604.8 444.7 1601.7 448.3 1600.0 450.0"/><path d="M1630.0 386.0C1626.7 387.0 1616.7 391.3 1610.0 392.0C1603.3 392.7 1593.3 390.3 1590.0 390.0"/><path d="M1646.0 369.0C1647.5 370.8 1651.8 377.5 1655.0 380.0C1658.2 382.5 1663.3 383.3 1665.0 384.0"/><path d="M1600.0 363.0C1600.8 360.0 1605.0 350.5 1605.0 345.0C1605.0 339.5 1600.8 332.5 1600.0 330.0"/><path d="M1560.0 320.0C1562.5 321.7 1570.0 327.5 1575.0 330.0C1580.0 332.5 1587.5 334.2 1590.0 335.0"/><path d="M1500.0 278.0C1500.8 280.8 1503.3 289.7 1505.0 295.0C1506.7 300.3 1509.2 307.5 1510.0 310.0"/><path d="M1535.0 280.0C1535.8 277.5 1539.7 269.2 1540.0 265.0C1540.3 260.8 1537.5 256.7 1537.0 255.0"/><path d="M1478.0 244.0C1481.7 243.3 1490.5 239.3 1500.0 240.0C1509.5 240.7 1529.2 246.7 1535.0 248.0"/><path d="M1497.0 324.0C1500.8 325.0 1511.5 323.8 1520.0 330.0C1528.5 336.2 1543.3 355.8 1548.0 361.0"/><path d="M1512.0 392.0C1515.0 393.3 1524.7 397.8 1530.0 400.0C1535.3 402.2 1537.8 402.7 1544.0 405.0C1550.2 407.3 1563.2 412.5 1567.0 414.0"/><path d="M1516.0 446.0C1516.7 449.2 1520.0 457.7 1520.0 465.0C1520.0 472.3 1516.7 485.8 1516.0 490.0"/><path d="M1441.0 446.0C1442.5 450.0 1446.0 462.7 1450.0 470.0C1454.0 477.3 1462.5 486.7 1465.0 490.0"/><path d="M1456.0 430.0C1456.7 431.7 1459.5 436.7 1460.0 440.0C1460.5 443.3 1459.2 448.3 1459.0 450.0"/><path d="M1346.0 448.0C1345.0 451.7 1342.7 463.0 1340.0 470.0C1337.3 477.0 1331.7 486.7 1330.0 490.0"/><path d="M1375.0 450.0C1375.8 453.3 1376.7 464.3 1380.0 470.0C1383.3 475.7 1392.5 481.7 1395.0 484.0"/><path d="M1125.0 490.0C1125.5 486.7 1129.5 475.8 1128.0 470.0C1126.5 464.2 1118.0 457.5 1116.0 455.0"/><path d="M1200.0 490.0C1200.8 488.0 1203.0 481.8 1205.0 478.0C1207.0 474.2 1210.8 468.8 1212.0 467.0"/><path d="M1238.0 490.0C1240.8 489.2 1244.7 485.5 1255.0 485.0C1265.3 484.5 1292.5 486.7 1300.0 487.0"/><path d="M1303.0 150.0C1304.2 153.3 1310.5 163.3 1310.0 170.0C1309.5 176.7 1301.7 186.7 1300.0 190.0"/><path d="M1600.0 320.0C1601.7 322.5 1604.7 329.5 1610.0 335.0C1615.3 340.5 1628.3 350.0 1632.0 353.0"/><path d="M1700.0 490.0C1703.3 486.7 1711.0 475.2 1720.0 470.0C1729.0 464.8 1748.3 460.8 1754.0 459.0"/></g><g fill="#fff" stroke="#555" stroke-width="1.1"><circle cx="1027.6" cy="353" r="2.3"/><circle cx="1093" cy="424" r="2.3"/><circle cx="1116.5" cy="455" r="2.3"/><circle cx="1212" cy="466.4" r="2.3"/><circle cx="1466.4" cy="274.2" r="2.3"/><circle cx="1418.5" cy="440.8" r="2.3"/><circle cx="1614.6" cy="196.1" r="2.3"/><circle cx="1712" cy="183.5" r="2.3"/><circle cx="1646.4" cy="255.4" r="2.3"/><circle cx="1632.3" cy="353" r="2.3"/><circle cx="1758.8" cy="378.3" r="2.3"/><circle cx="1683.7" cy="416" r="2.3"/></g><g font-family="'Liberation Sans','Noto Sans CJK JP',sans-serif" paint-order="stroke" stroke-linejoin="round"><text x="1021.0" y="151.0" dy=".36em" font-size="10.4" textLength="55.0" lengthAdjust="spacing" class="ms">アイダホ州</text><text x="1150.5" y="163.0" dy=".36em" font-size="10.4" textLength="77.5" lengthAdjust="spacing" class="ms">ワイオミング州</text><text x="968.0" y="254.0" dy=".36em" font-size="10.4" textLength="44.0" lengthAdjust="spacing" class="ms">ネバダ州</text><text x="1086.0" y="274.0" dy=".36em" font-size="10.4" textLength="32.0" lengthAdjust="spacing" class="ms">ユタ州</text><text x="1206.5" y="285.5" dy=".36em" font-size="10.4" textLength="54.5" lengthAdjust="spacing" class="ms">コロラド州</text><text x="1330.5" y="206.5" dy=".36em" font-size="10.4" textLength="65.5" lengthAdjust="spacing" class="ms">ネブラスカ州</text><text x="1462.0" y="192.0" dy=".36em" font-size="10.4" textLength="55.0" lengthAdjust="spacing" class="ms">アイオワ州</text><text x="1357.0" y="291.0" dy=".36em" font-size="10.4" textLength="55.0" lengthAdjust="spacing" class="ms">カンザス州</text><text x="1483.0" y="296.0" dy=".36em" font-size="10.4" textLength="54.5" lengthAdjust="spacing" class="ms">ミズーリ州</text><text x="1548.0" y="243.0" dy=".36em" font-size="10.4" textLength="54.0" lengthAdjust="spacing" class="ms">イリノイ州</text><text x="1607.0" y="243.0" dy=".36em" font-size="10.4" textLength="78.0" lengthAdjust="spacing" class="ms">インディアナ州</text><text x="1690.0" y="241.0" dy=".36em" font-size="10.4" textLength="55.5" lengthAdjust="spacing" class="ms">オハイオ州</text><text x="1782.0" y="225.0" dy=".36em" font-size="10.4" textLength="88.6" lengthAdjust="spacing" class="ms">ペンシルベニア州</text><text x="1823.5" y="167.0" dy=".36em" font-size="10.4" textLength="77.5" lengthAdjust="spacing" class="ms">ニューヨーク州</text><text x="1876.0" y="250.0" dy=".36em" font-size="10.4" textLength="33.0" lengthAdjust="spacing" class="ms">ニュー</text><text x="1859.0" y="261.5" dy=".36em" font-size="10.4" textLength="66.0" lengthAdjust="spacing" class="ms">ジャージー州</text><text x="1842.0" y="277.0" dy=".36em" font-size="10.4" textLength="66.0" lengthAdjust="spacing" class="ms">デラウェア州</text><text x="1734.0" y="285.5" dy=".36em" font-size="10.4" textLength="43.5" lengthAdjust="spacing" class="ms">ウェスト</text><text x="1723.0" y="296.0" dy=".36em" font-size="10.4" textLength="67.0" lengthAdjust="spacing" class="ms">バージニア州</text><text x="1770.0" y="319.0" dy=".36em" font-size="10.4" textLength="67.0" lengthAdjust="spacing" class="ms">バージニア州</text><text x="1631.5" y="319.0" dy=".36em" font-size="10.4" textLength="79.1" lengthAdjust="spacing" class="ms">ケンタッキー州</text><text x="1607.0" y="365.0" dy=".36em" font-size="10.4" textLength="54.5" lengthAdjust="spacing" class="ms">テネシー州</text><text x="1782.0" y="363.0" dy=".36em" font-size="10.4" textLength="34.0" lengthAdjust="spacing" class="ms">ノース</text><text x="1765.0" y="373.6" dy=".36em" font-size="10.4" textLength="67.0" lengthAdjust="spacing" class="ms">カロライナ州</text><text x="1751.0" y="407.5" dy=".36em" font-size="10.4" textLength="33.0" lengthAdjust="spacing" class="ms">サウス</text><text x="1733.0" y="418.0" dy=".36em" font-size="10.4" textLength="67.0" lengthAdjust="spacing" class="ms">カロライナ州</text><text x="1674.0" y="445.0" dy=".36em" font-size="10.4" textLength="66.6" lengthAdjust="spacing" class="ms">ジョージア州</text><text x="1607.0" y="437.6" dy=".36em" font-size="10.4" textLength="54.5" lengthAdjust="spacing" class="ms">アラバマ州</text><text x="1538.5" y="421.6" dy=".36em" font-size="10.4" textLength="65.5" lengthAdjust="spacing" class="ms">ミシシッピ州</text><text x="1474.5" y="391.5" dy=".36em" font-size="10.4" textLength="78.1" lengthAdjust="spacing" class="ms">アーカンソー州</text><text x="1374.7" y="365.0" dy=".36em" font-size="10.4" textLength="66.8" lengthAdjust="spacing" class="ms">オクラホマ州</text><text x="1341.8" y="472.5" dy=".36em" font-size="10.4" textLength="55.5" lengthAdjust="spacing" class="ms">テキサス州</text><text x="1206.5" y="401.5" dy=".36em" font-size="10.4" textLength="32.0" lengthAdjust="spacing" class="ms">ニュー</text><text x="1195.0" y="412.2" dy=".36em" font-size="10.4" textLength="55.7" lengthAdjust="spacing" class="ms">メキシコ州</text><text x="1073.8" y="402.0" dy=".36em" font-size="10.4" textLength="55.5" lengthAdjust="spacing" class="ms">アリゾナ州</text><text x="1000.0" y="331.8" dy=".36em" font-size="12.5" textLength="57.8" lengthAdjust="spacing" class="mc">ラスベガス</text><text x="1002.0" y="344.0" dy=".36em" font-size="11.5" textLength="51.0" lengthAdjust="spacing" class="mc">Las Vegas</text><text x="926.0" y="388.0" dy=".36em" font-size="12.5" textLength="70.5" lengthAdjust="spacing" class="mc">ロサンゼルス</text><text x="940.0" y="400.0" dy=".36em" font-size="11.5" textLength="56.0" lengthAdjust="spacing" class="mc">Los Angeles</text><text x="949.0" y="420.7" dy=".36em" font-size="12.5" textLength="71.0" lengthAdjust="spacing" class="mc">サンディエゴ</text><text x="958.0" y="434.0" dy=".36em" font-size="11.5" textLength="51.0" lengthAdjust="spacing" class="mc">San Diego</text><text x="1098.2" y="417.9" dy=".36em" font-size="12.5" textLength="70.6" lengthAdjust="spacing" class="mc">フェニックス</text><text x="1097.7" y="430.0" dy=".36em" font-size="11.5" textLength="39.1" lengthAdjust="spacing" class="mc">Phoenix</text><text x="1093.0" y="464.5" dy=".36em" font-size="12.5" textLength="47.6" lengthAdjust="spacing" class="mc">ツーソン</text><text x="1098.8" y="477.0" dy=".36em" font-size="11.5" textLength="36.2" lengthAdjust="spacing" class="mc">Tucson</text><text x="1216.8" y="460.7" dy=".36em" font-size="12.5" textLength="59.2" lengthAdjust="spacing" class="mc">エル・パソ</text><text x="1216.8" y="473.5" dy=".36em" font-size="11.5" textLength="36.2" lengthAdjust="spacing" class="mc">El Paso</text><text x="1423.6" y="254.0" dy=".36em" font-size="12.5" textLength="82.9" lengthAdjust="spacing" class="mc">カンザスシティ</text><text x="1436.8" y="265.8" dy=".36em" font-size="11.5" textLength="58.2" lengthAdjust="spacing" class="mc">Kansas City</text><text x="1402.0" y="419.3" dy=".36em" font-size="12.5" textLength="34.8" lengthAdjust="spacing" class="mc">ダラス</text><text x="1403.9" y="432.0" dy=".36em" font-size="11.5" textLength="30.6" lengthAdjust="spacing" class="mc">Dallas</text><text x="1598.6" y="174.0" dy=".36em" font-size="12.5" textLength="33.9" lengthAdjust="spacing" class="mc">シカゴ</text><text x="1593.9" y="187.6" dy=".36em" font-size="11.5" textLength="40.5" lengthAdjust="spacing" class="mc">Chicago</text><text x="1682.4" y="161.3" dy=".36em" font-size="12.5" textLength="59.3" lengthAdjust="spacing" class="mc">デトロイト</text><text x="1695.5" y="174.0" dy=".36em" font-size="11.5" textLength="32.5" lengthAdjust="spacing" class="mc">Detroit</text><text x="1610.8" y="265.3" dy=".36em" font-size="12.5" textLength="71.6" lengthAdjust="spacing" class="mc">インディアナ</text><text x="1628.7" y="277.5" dy=".36em" font-size="12.5" textLength="34.8" lengthAdjust="spacing" class="mc">ポリス</text><text x="1615.5" y="289.8" dy=".36em" font-size="11.5" textLength="60.3" lengthAdjust="spacing" class="mc">Indianapolis</text><text x="1556.3" y="332.2" dy=".36em" font-size="12.5" textLength="71.3" lengthAdjust="spacing" class="mc">ナッシュビル</text><text x="1582.0" y="344.0" dy=".36em" font-size="11.5" textLength="47.0" lengthAdjust="spacing" class="mc">Nashville</text><text x="1683.0" y="356.2" dy=".36em" font-size="12.5" textLength="70.7" lengthAdjust="spacing" class="mc">シャーロット</text><text x="1710.5" y="369.4" dy=".36em" font-size="11.5" textLength="45.1" lengthAdjust="spacing" class="mc">Charlotte</text><text x="1654.0" y="394.8" dy=".36em" font-size="12.5" textLength="58.3" lengthAdjust="spacing" class="mc">アトランタ</text><text x="1666.8" y="407.0" dy=".36em" font-size="11.5" textLength="35.2" lengthAdjust="spacing" class="mc">Atlanta</text><text x="1701.0" y="481.4" dy=".36em" font-size="12.5" textLength="83.8" lengthAdjust="spacing" class="mc">ジャクソンビル</text><text x="1246.0" y="255.0" dy=".36em" font-size="19" textLength="150.0" lengthAdjust="spacing" class="mn">アメリカ合衆国</text></g><circle cx="1646.3" cy="220.6" r="25.8" fill="#e6e7e9"/><circle cx="1646.2" cy="213" r="8.9" fill="#3f4b55"/><path d="M1630 233.8C1631.5 227 1638 224.2 1646.2 224.2S1661 227 1662.4 233.8Z" fill="#3f4b55"/><g><clipPath id="pk"><circle cx="1905.5" cy="192.5" r="26"/></clipPath><g clip-path="url(#pk)"><rect x="1878" y="165" width="20" height="55" fill="#3e3e2b"/><rect x="1884" y="165" width="12" height="11" fill="#dfe5dc"/><rect x="1886" y="174" width="10" height="6" fill="#54573a"/><rect x="1880" y="190" width="16" height="13" fill="#4a4a33"/><rect x="1880" y="203" width="16" height="12" fill="#7f9c3a"/><rect x="1891" y="206" width="6" height="12" fill="#7d8299"/><circle cx="1884" cy="196" r=".9" fill="#c9607a"/><circle cx="1888" cy="199" r=".9" fill="#c9607a"/><circle cx="1891" cy="194" r=".9" fill="#d9708a"/><circle cx="1886" cy="189" r=".8" fill="#c9607a"/></g></g></svg>
<div class="abs" style="left:9px;top:9px;width:166px;height:37px;background:#fff;border-radius:2px;box-shadow:0 1px 3px rgba(0,0,0,.3)"></div>
<div class="abs" style="left:74px;top:9px;width:1px;height:37px;background:#ececec"></div>
<div class="t" id="mt1" style="left:25px;top:16.600px;font-size:17.5px;color:#000;font-family:'Noto Sans CJK JP',sans-serif">地図</div>
<div class="t" id="mt2" style="left:91px;top:16.600px;font-size:17.5px;color:#565656;font-family:'Noto Sans CJK JP',sans-serif;letter-spacing:-.6px">航空写真</div>
<div class="abs" style="left:9px;top:156px;width:37px;height:37px;background:#fff;border-radius:2px;box-shadow:0 1px 3px rgba(0,0,0,.3)"></div>
<svg class="abs" style="left:18px;top:160px" width="19" height="30" viewBox="0 0 19 30"><path d="M5 9.800H13.600C14.600 9.800 15.200 10.400 15.400 11.400L17 19.600L15.400 20.200L14 15.600V28.600H9.900V21H8.700V28.600H4.600V15.600L3.200 20.200L1.600 19.600L3.200 11.400C3.400 10.400 4 9.800 5 9.800Z" fill="#fbb722" stroke="#8a6d2a" stroke-width=".6"/><path d="M6.200 9.800L9.300 14.800L12.400 9.800Z" fill="#e07b1f"/><circle cx="9.300" cy="4.900" r="4.700" fill="#fbb722" stroke="#8a6d2a" stroke-width=".6"/></svg>
<div class="abs" style="left:858px;top:9px;width:37px;height:37px;background:#fff;border-radius:2px;box-shadow:0 1px 3px rgba(0,0,0,.3)"></div>
<svg class="abs" style="left:868px;top:19.600px" width="17" height="17" viewBox="0 0 17 17"><path d="M1 5.6V1H5.6M11.4 1H16V5.6M16 11.4V16H11.4M5.6 16H1V11.4" fill="none" stroke="#666" stroke-width="2"/></svg>
<div class="abs" style="left:858px;top:250px;width:37px;height:76px;background:#fff;border-radius:2px;box-shadow:0 1px 3px rgba(0,0,0,.3)"></div>
<div class="abs" style="left:863px;top:288px;width:27px;height:1px;background:#e6e6e6"></div>
<svg class="abs" style="left:868px;top:260px" width="17" height="17" viewBox="0 0 17 17"><path d="M8.5 .5V16.5M.5 8.5H16.5" stroke="#666" stroke-width="2.8"/></svg>
<svg class="abs" style="left:868px;top:299px" width="17" height="17" viewBox="0 0 17 17"><path d="M.5 8.5H16.5" stroke="#666" stroke-width="2.8"/></svg>
<div class="t" id="glogo" style="left:5.5px;top:324px;font-size:27px;font-weight:bold;letter-spacing:-.8px;transform:scaleX(.62);transform-origin:0 0;font-family:'Liberation Sans',sans-serif;text-shadow:0 0 2px #fff,0 0 2px #fff"><span style="color:#4285f4">G</span><span style="color:#ea4335">o</span><span style="color:#fbbc05">o</span><span style="color:#4285f4">g</span><span style="color:#34a853">l</span><span style="color:#ea4335">e</span></div>
<div class="abs" style="left:698px;top:336px;width:207px;height:3px;background:rgba(245,245,245,.75)"></div>
<!--MAPEND-->
</div>

<!-- SUMMARY PANEL -->
<div class="panel" id="sp" style="left:990px;top:505px;width:445px;height:377px"><div class="phead" style="height:37px"></div></div>
<div class="t" id="tsum" style="left:1008px;top:516px;font-size:13px;color:#59626a">Summary for</div>
<div id="sumname"><div class="abs" style="left:1086.0px;top:518.0px;width:10.8px;height:4.0px;background:#a8d8f8"></div><div class="abs" style="left:1096.8px;top:518.0px;width:5.3px;height:1.9px;background:#1f2f3f"></div><div class="abs" style="left:1091.1px;top:519.9px;width:5.8px;height:2.0px;background:#2a3a4a"></div><div class="abs" style="left:1096.8px;top:519.9px;width:5.3px;height:2.0px;background:#ffe4a8"></div><div class="abs" style="left:1091.1px;top:522.0px;width:11.1px;height:1.2px;background:#1a60c0"></div><div class="abs" style="left:1091.1px;top:523.1px;width:5.8px;height:1.8px;background:#8a2a8a"></div><div class="abs" style="left:1096.8px;top:523.1px;width:5.3px;height:1.8px;background:#a8d8f8"></div><div class="abs" style="left:1091.1px;top:524.9px;width:5.8px;height:2.8px;background:#c8782a"></div><div class="abs" style="left:1091.1px;top:527.7px;width:5.8px;height:2.2px;background:#f8f0c0"></div><div class="abs" style="left:1102.1px;top:527.7px;width:5.8px;height:2.2px;background:#8a2a3a"></div><div class="abs" style="left:1107.9px;top:518.0px;width:5.0px;height:1.9px;background:#1a1f7a"></div><div class="abs" style="left:1107.9px;top:526.8px;width:5.0px;height:1.2px;background:#b8683a"></div><div class="abs" style="left:1118.1px;top:518.0px;width:5.8px;height:1.9px;background:#1a58a8"></div><div class="abs" style="left:1118.1px;top:519.9px;width:5.8px;height:2.0px;background:#e8a050"></div><div class="abs" style="left:1124.1px;top:523.1px;width:4.8px;height:1.8px;background:#ffe4a8"></div><div class="abs" style="left:1124.1px;top:524.9px;width:4.8px;height:1.9px;background:#80c0f8"></div><div class="abs" style="left:1134.0px;top:522.0px;width:6.0px;height:2.9px;background:#c8f0f0"></div><div class="abs" style="left:1145.1px;top:519.9px;width:5.8px;height:2.0px;background:#a05060"></div><div class="abs" style="left:1145.1px;top:522.0px;width:5.8px;height:2.9px;background:#8a3090"></div><div class="abs" style="left:1145.1px;top:524.9px;width:5.8px;height:1.9px;background:#50a0e8"></div><div class="abs" style="left:1151.0px;top:518.0px;width:5.0px;height:1.9px;background:#e0a050"></div><div class="abs" style="left:1151.0px;top:519.9px;width:5.0px;height:2.0px;background:#5a2a7a"></div><div class="abs" style="left:1156.0px;top:518.0px;width:5.0px;height:6.9px;background:#6a3a98"></div><div class="abs" style="left:1161.0px;top:518.0px;width:5.9px;height:6.9px;background:#f4f4dc"></div><div class="abs" style="left:1161.0px;top:524.9px;width:5.9px;height:1.9px;background:#f8c080"></div><div class="abs" style="left:1161.0px;top:526.8px;width:5.9px;height:1.2px;background:#2a3a4a"></div><div class="abs" style="left:1156.0px;top:527.7px;width:5.0px;height:2.2px;background:#f8f0c0"></div><div class="abs" style="left:1172.1px;top:522.0px;width:5.8px;height:2.9px;background:#c8802a"></div><div class="abs" style="left:1183.0px;top:518.0px;width:5.0px;height:4.9px;background:#e0a060"></div><div class="abs" style="left:1183.0px;top:522.8px;width:5.0px;height:2.0px;background:#5a58b8"></div><div class="abs" style="left:1183.0px;top:524.9px;width:5.0px;height:1.9px;background:#c8f0f0"></div><div class="abs" style="left:1188.1px;top:518.0px;width:5.9px;height:1.9px;background:#a860a0"></div><div class="abs" style="left:1188.1px;top:519.9px;width:5.9px;height:2.9px;background:#d09060"></div><div class="abs" style="left:1188.1px;top:522.8px;width:5.9px;height:2.0px;background:#f8d8a0"></div><div class="abs" style="left:1199.0px;top:522.0px;width:5.9px;height:1.0px;background:#2a3a4a"></div><div class="abs" style="left:1199.0px;top:522.9px;width:5.9px;height:7.0px;background:#f4f4c0"></div><div class="abs" style="left:1204.9px;top:518.0px;width:5.1px;height:1.9px;background:#c8f0f0"></div><div class="abs" style="left:1210.0px;top:527.7px;width:5.0px;height:2.2px;background:#c8f0f0"></div><div class="abs" style="left:1226.0px;top:526.8px;width:5.0px;height:1.2px;background:#8a2a3a"></div><div class="abs" style="left:1231.0px;top:518.0px;width:5.9px;height:4.0px;background:#dcf0f0"></div><div class="abs" style="left:1118.1px;top:528.0px;width:5.8px;height:1.9px;background:#e0f4f4"></div><div class="abs" style="left:1112.9px;top:522.0px;width:5.1px;height:1.0px;background:#e0f4f4"></div></div>
<div class="tile teal" style="left:1010px;top:563px;height:71px"><b>58</b><i>Total</i></div>
<div class="tile grey" style="left:1214px;top:563px;height:71px"><b>5</b><i>Networks</i></div>
<div class="tile teal" style="left:1010px;top:638px;height:72px"><b>0</b><i>Persons matches</i></div>
<div class="tile org" style="left:1214px;top:638px;height:72px"><b>31</b><i>Potential persons</i></div>
<div class="tile teal" style="left:1010px;top:714px;height:71px"><b>0</b><i>Groups matches</i></div>
<div class="tile org" style="left:1214px;top:714px;height:71px"><b>16</b><i>Potential groups</i></div>
<div class="tile dark" style="left:1010px;top:789px;height:71.5px"><b>0</b><i>Posts</i></div>
<div class="tile grey" style="left:1214px;top:789px;height:71.5px"><b>30</b><i>Locations</i></div>

<!-- NETWORKS PANEL -->
<div class="panel" id="np" style="left:1449px;top:505px;width:446px;height:377px"><div class="phead" style="height:37px"></div></div>
<div class="t" id="tnet" style="left:1468px;top:516px;font-size:13px;color:#59626a">Networks</div>
<svg class="abs" style="left:1449px;top:542px" width="446" height="340" viewBox="1449 542 446 340"><path d="M1669.60 609.80A106.7 106.7 0 0 1 1681.14 610.43L1676.56 652.48A64.4 64.4 0 0 0 1669.60 652.10Z" fill="#7cb5ec" stroke="#fff" stroke-width="1" stroke-linejoin="round"/><path d="M1681.14 610.43A106.7 106.7 0 1 1 1646.66 820.71L1655.76 779.39A64.4 64.4 0 1 0 1676.56 652.48Z" fill="#434348" stroke="#fff" stroke-width="1" stroke-linejoin="round"/><path d="M1646.66 820.71A106.7 106.7 0 0 1 1575.33 666.52L1612.70 686.33A64.4 64.4 0 0 0 1655.76 779.39Z" fill="#90ed7d" stroke="#fff" stroke-width="1" stroke-linejoin="round"/><path d="M1575.33 666.52A106.7 106.7 0 0 1 1635.53 615.39L1649.04 655.47A64.4 64.4 0 0 0 1612.70 686.33Z" fill="#f7a35c" stroke="#fff" stroke-width="1" stroke-linejoin="round"/><path d="M1635.53 615.39A106.7 106.7 0 0 1 1669.60 609.80L1669.60 652.10A64.4 64.4 0 0 0 1649.04 655.47Z" fill="#8085e9" stroke="#fff" stroke-width="1" stroke-linejoin="round"/>
<g fill="none" stroke-width="1">
<path d="M1681.8 580.5C1677.5 584 1675.5 600 1675.4 610.2" stroke="#7cb5ec"/>
<path d="M1643.4 583C1648.5 587 1650.5 600 1652.6 610.8" stroke="#8085e9"/>
<path d="M1578 613.6C1586 615 1594 627 1600.6 634.4" stroke="#f7a35c"/>
<path d="M1775.4 733.6C1786 735.5 1797 738 1807 739" stroke="#434348"/>
<path d="M1543 774C1554 772 1563 766 1572.6 761.6" stroke="#90ed7d"/>
</g>
<g font-family="'DejaVu Sans Condensed','DejaVu Sans','Liberation Sans',sans-serif" font-weight="bold" font-size="10.4" fill="#1d2030">
<text x="1691.6" y="587.6" id="lrc" textLength="57" lengthAdjust="spacingAndGlyphs">Risk Check</text>
<text x="1610.8" y="589.4" id="lbing" textLength="23" lengthAdjust="spacingAndGlyphs">Bing</text>
<text x="1492.8" y="619.6" id="lgs" textLength="75.8" lengthAdjust="spacingAndGlyphs">Google_search</text>
</g>
</svg>
<div id="lli"><div class="abs" style="left:1816.0px;top:740.0px;width:2.0px;height:7.9px;background:#ffffd0"></div><div class="abs" style="left:1818.0px;top:740.0px;width:3.0px;height:7.9px;background:#141a88"></div><div class="abs" style="left:1824.0px;top:744.1px;width:2.9px;height:3.8px;background:#48a0e8"></div><div class="abs" style="left:1826.9px;top:744.1px;width:2.3px;height:3.8px;background:#1060b8"></div><div class="abs" style="left:1829.2px;top:744.1px;width:2.9px;height:3.8px;background:#b8682a"></div><div class="abs" style="left:1832.1px;top:740.0px;width:2.9px;height:7.9px;background:#e8a860"></div><div class="abs" style="left:1835.0px;top:744.1px;width:3.0px;height:3.8px;background:#141a70"></div><div class="abs" style="left:1838.0px;top:744.1px;width:2.2px;height:3.8px;background:#e09830"></div><div class="abs" style="left:1840.2px;top:744.1px;width:2.7px;height:3.8px;background:#14283a"></div><div class="abs" style="left:1842.9px;top:744.1px;width:3.1px;height:3.8px;background:#1a88a8"></div><div class="abs" style="left:1846.0px;top:744.1px;width:2.9px;height:3.8px;background:#b8e8ff"></div><div class="abs" style="left:1849.0px;top:740.0px;width:2.2px;height:7.9px;background:#1060b8"></div><div class="abs" style="left:1851.2px;top:740.0px;width:2.8px;height:7.9px;background:#d08a2a"></div><div class="abs" style="left:1854.0px;top:744.1px;width:3.0px;height:3.8px;background:#e8a860"></div><div class="abs" style="left:1857.0px;top:744.1px;width:3.0px;height:3.8px;background:#ffd890"></div><div class="abs" style="left:1860.0px;top:744.1px;width:2.1px;height:3.8px;background:#dcffff"></div></div>
<div id="lfb"><div class="abs" style="left:1482.0px;top:773.0px;width:2.8px;height:5.8px;background:#141a98"></div><div class="abs" style="left:1482.0px;top:775.2px;width:5.7px;height:1.7px;background:#1f2f3a"></div><div class="abs" style="left:1488.1px;top:775.2px;width:7.7px;height:3.6px;background:#1f2f3a"></div><div class="abs" style="left:1499.1px;top:775.2px;width:1.8px;height:3.6px;background:#14146a"></div><div class="abs" style="left:1500.8px;top:775.2px;width:3.3px;height:1.7px;background:#141a88"></div><div class="abs" style="left:1504.2px;top:770.1px;width:2.7px;height:8.8px;background:#141f6a"></div><div class="abs" style="left:1504.2px;top:775.2px;width:2.7px;height:3.6px;background:#1f2f3a"></div><div class="abs" style="left:1507.1px;top:775.2px;width:2.9px;height:3.6px;background:#ffe4a0"></div><div class="abs" style="left:1510.0px;top:775.2px;width:1.7px;height:3.6px;background:#b8a050"></div><div class="abs" style="left:1511.7px;top:775.2px;width:3.3px;height:3.6px;background:#ffffe0"></div><div class="abs" style="left:1515.0px;top:775.2px;width:6.0px;height:3.6px;background:#80c8f8"></div><div class="abs" style="left:1521.0px;top:775.2px;width:2.1px;height:3.6px;background:#141a98"></div><div class="abs" style="left:1523.1px;top:770.1px;width:2.7px;height:5.1px;background:#1060b8"></div><div class="abs" style="left:1523.1px;top:775.2px;width:2.7px;height:1.7px;background:#1f2f3a"></div><div class="abs" style="left:1523.1px;top:776.9px;width:2.7px;height:2.0px;background:#108888"></div><div class="abs" style="left:1525.8px;top:775.2px;width:3.1px;height:1.7px;background:#c8f8ff"></div><div class="abs" style="left:1525.8px;top:776.9px;width:3.1px;height:2.0px;background:#48a0e8"></div></div>

</body>
</html>
